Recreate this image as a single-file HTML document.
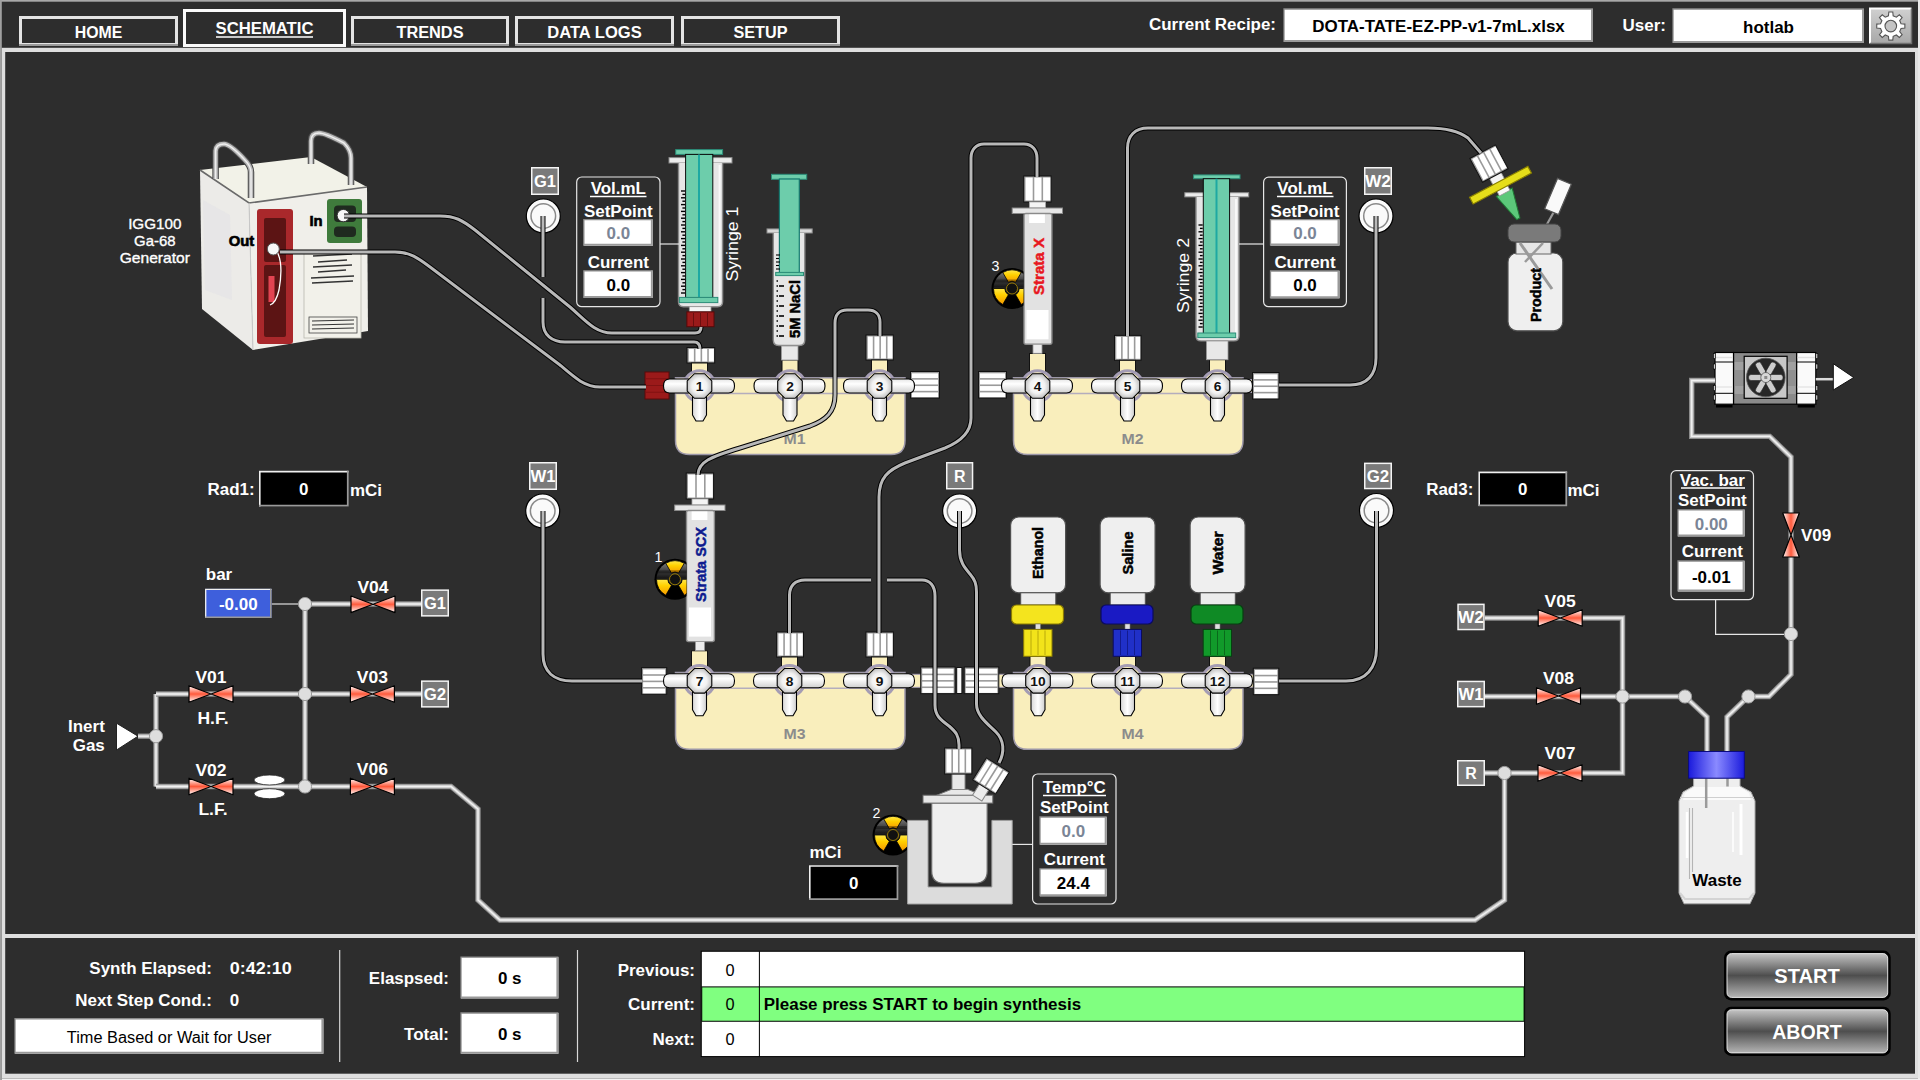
<!DOCTYPE html><html><head><meta charset="utf-8"><style>html,body{margin:0;padding:0;background:#2d2d2d;overflow:hidden}svg{display:block}</style></head><body>
<svg width="1920" height="1080" viewBox="0 0 1920 1080">
<defs>
<linearGradient id="vgrad" x1="0" y1="0" x2="0" y2="1"><stop offset="0" stop-color="#fff"/><stop offset="0.5" stop-color="#ff5a3c"/><stop offset="1" stop-color="#fff"/></linearGradient>
<linearGradient id="vgradh" x1="0" y1="0" x2="1" y2="0"><stop offset="0" stop-color="#fff"/><stop offset="0.5" stop-color="#ff5a3c"/><stop offset="1" stop-color="#fff"/></linearGradient>
<linearGradient id="armh" x1="0" y1="0" x2="0" y2="1"><stop offset="0" stop-color="#e6e6e6"/><stop offset="0.35" stop-color="#fff"/><stop offset="1" stop-color="#cfcfcf"/></linearGradient>
<linearGradient id="armv" x1="0" y1="0" x2="1" y2="0"><stop offset="0" stop-color="#d8d8d8"/><stop offset="0.5" stop-color="#fff"/><stop offset="1" stop-color="#cfcfcf"/></linearGradient>
<radialGradient id="hub" cx="0.5" cy="0.5" r="0.5"><stop offset="0" stop-color="#fff"/><stop offset="0.6" stop-color="#f2f2f2"/><stop offset="1" stop-color="#c4c4c4"/></radialGradient>
<linearGradient id="radg" x1="0" y1="0" x2="0" y2="1"><stop offset="0" stop-color="#ffe84a"/><stop offset="0.4" stop-color="#ffd000"/><stop offset="1" stop-color="#f59800"/></linearGradient>
<linearGradient id="radblk" x1="0" y1="0" x2="0" y2="1"><stop offset="0" stop-color="#8a8a8a"/><stop offset="0.3" stop-color="#3a3a3a"/><stop offset="0.45" stop-color="#1a1a1a"/><stop offset="0.55" stop-color="#333"/><stop offset="0.7" stop-color="#000"/><stop offset="1" stop-color="#000"/></linearGradient>
<linearGradient id="btng" x1="0" y1="0" x2="0" y2="1"><stop offset="0" stop-color="#c4c4c4"/><stop offset="0.5" stop-color="#4e4e4e"/><stop offset="1" stop-color="#b4b4b4"/></linearGradient>
<linearGradient id="gearg" x1="0" y1="0" x2="0" y2="1"><stop offset="0" stop-color="#d0d0d0"/><stop offset="1" stop-color="#a8a8a8"/></linearGradient>
<linearGradient id="capblue" x1="0" y1="0" x2="1" y2="0"><stop offset="0" stop-color="#1a1adc"/><stop offset="0.5" stop-color="#8a8aff"/><stop offset="1" stop-color="#1a1adc"/></linearGradient>
<linearGradient id="bottleg" x1="0" y1="0" x2="1" y2="0"><stop offset="0" stop-color="#e8e8e8"/><stop offset="0.3" stop-color="#fafafa"/><stop offset="1" stop-color="#e0e0e0"/></linearGradient>
</defs>
<rect x="0" y="0" width="1920.00" height="1080.00" fill="#2d2d2d" />
<rect x="0" y="0" width="1920.00" height="1.70" fill="#a8a8a8" />
<rect x="0" y="0" width="1.80" height="1080.00" fill="#a0a0a0" />
<rect x="1918" y="0" width="2.00" height="1080.00" fill="#e8e8e8" />
<rect x="1.8" y="47.8" width="1916.20" height="1030.70" fill="#dedede" />
<rect x="5.2" y="52" width="1909.80" height="882.00" fill="#2d2d2d" />
<rect x="5.2" y="938" width="1909.80" height="135.70" fill="#2d2d2d" />
<rect x="1.8" y="1078.5" width="1918.20" height="1.50" fill="#f2f2f2" />
<rect x="20.5" y="17.5" width="156.00" height="27.00" fill="#2d2d2d" stroke="#e4e4e4" stroke-width="3" />
<line x1="19" y1="45" x2="178" y2="45" stroke="#9a9a9a" stroke-width="2"/>
<text x="98.5" y="32.0" font-family='"Liberation Sans", sans-serif' font-size="16" font-weight="bold" fill="#fff" text-anchor="middle" dominant-baseline="central" textLength="47.5" lengthAdjust="spacingAndGlyphs" >HOME</text>
<rect x="184.5" y="10.5" width="160.00" height="35.00" fill="#2d2d2d" stroke="#fafafa" stroke-width="3" />
<text x="264.5" y="28.0" font-family='"Liberation Sans", sans-serif' font-size="16" font-weight="bold" fill="#fff" text-anchor="middle" dominant-baseline="central" textLength="98" lengthAdjust="spacingAndGlyphs" >SCHEMATIC</text>
<line x1="216.0" y1="37.0" x2="313.0" y2="37.0" stroke="#fff" stroke-width="1.6"/>
<rect x="352.5" y="17.5" width="155.00" height="27.00" fill="#2d2d2d" stroke="#e4e4e4" stroke-width="3" />
<line x1="351" y1="45" x2="509" y2="45" stroke="#9a9a9a" stroke-width="2"/>
<text x="430.0" y="32.0" font-family='"Liberation Sans", sans-serif' font-size="16" font-weight="bold" fill="#fff" text-anchor="middle" dominant-baseline="central" textLength="67" lengthAdjust="spacingAndGlyphs" >TRENDS</text>
<rect x="516.5" y="17.5" width="156.00" height="27.00" fill="#2d2d2d" stroke="#e4e4e4" stroke-width="3" />
<line x1="515" y1="45" x2="674" y2="45" stroke="#9a9a9a" stroke-width="2"/>
<text x="594.5" y="32.0" font-family='"Liberation Sans", sans-serif' font-size="16" font-weight="bold" fill="#fff" text-anchor="middle" dominant-baseline="central" textLength="94.5" lengthAdjust="spacingAndGlyphs" >DATA LOGS</text>
<rect x="682.5" y="17.5" width="156.00" height="27.00" fill="#2d2d2d" stroke="#e4e4e4" stroke-width="3" />
<line x1="681" y1="45" x2="840" y2="45" stroke="#9a9a9a" stroke-width="2"/>
<text x="760.5" y="32.0" font-family='"Liberation Sans", sans-serif' font-size="16" font-weight="bold" fill="#fff" text-anchor="middle" dominant-baseline="central" textLength="54" lengthAdjust="spacingAndGlyphs" >SETUP</text>
<text x="1276" y="24.5" font-family='"Liberation Sans", sans-serif' font-size="16" font-weight="bold" fill="#fff" text-anchor="end" dominant-baseline="central" textLength="127" lengthAdjust="spacingAndGlyphs" >Current Recipe:</text>
<rect x="1284" y="9" width="309.00" height="33.00" fill="#fff" />
<path d="M1284 42 V9 H1593" fill="none" stroke="#8c8c8c" stroke-width="1.3"/>
<path d="M1284 41 H1592 V9" fill="none" stroke="#9a9a9a" stroke-width="2"/>
<text x="1438.5" y="26.5" font-family='"Liberation Sans", sans-serif' font-size="16" font-weight="bold" fill="#000" text-anchor="middle" dominant-baseline="central" textLength="252.55" lengthAdjust="spacingAndGlyphs" >DOTA-TATE-EZ-PP-v1-7mL.xlsx</text>
<text x="1666" y="25" font-family='"Liberation Sans", sans-serif' font-size="16" font-weight="bold" fill="#fff" text-anchor="end" dominant-baseline="central" textLength="43.36" lengthAdjust="spacingAndGlyphs" >User:</text>
<rect x="1673" y="9" width="191.00" height="34.00" fill="#fff" />
<path d="M1673 43 V9 H1864" fill="none" stroke="#8c8c8c" stroke-width="1.3"/>
<path d="M1673 42 H1863 V9" fill="none" stroke="#9a9a9a" stroke-width="2"/>
<text x="1768.5" y="27.0" font-family='"Liberation Sans", sans-serif' font-size="16" font-weight="bold" fill="#000" text-anchor="middle" dominant-baseline="central" textLength="50.87" lengthAdjust="spacingAndGlyphs" >hotlab</text>
<rect x="1870" y="8.5" width="41.50" height="35.00" fill="url(#gearg)" />
<path d="M1870 43.5 V8.5 H1911.5" fill="none" stroke="#fff" stroke-width="2"/>
<path d="M1870 43.5 H1911.5 V8.5" fill="none" stroke="#707070" stroke-width="1.5"/>
<polygon points="1901.03,23.74 1904.86,24.12 1904.86,28.08 1901.03,28.46 1899.70,31.66 1902.14,34.65 1899.35,37.44 1896.36,35.00 1893.16,36.33 1892.78,40.16 1888.82,40.16 1888.44,36.33 1885.24,35.00 1882.25,37.44 1879.46,34.65 1881.90,31.66 1880.57,28.46 1876.74,28.08 1876.74,24.12 1880.57,23.74 1881.90,20.54 1879.46,17.55 1882.25,14.76 1885.24,17.20 1888.44,15.87 1888.82,12.04 1892.78,12.04 1893.16,15.87 1896.36,17.20 1899.35,14.76 1902.14,17.55 1899.70,20.54" fill="#fff" stroke="#555" stroke-width="1.1"/>
<circle cx="1890.8" cy="26.1" r="5.8" fill="#c4c4c4" stroke="#555" stroke-width="1.1"/>
<g>
<polygon points="200,170 249,203 253,350 202,309" fill="#ecebe8"/>
<polygon points="203,200 230,215 232,300 205,290" fill="#dcdbe6" opacity="0.3"/>
<polygon points="200,170 311,157 367,187 249,203" fill="#f2f2e8"/>
<polygon points="249,203 367,187 368,331 253,350" fill="#f0efea"/>
<polyline points="200,170 249,203 367,187" fill="none" stroke="#6a6a6a" stroke-width="1.6"/>
<line x1="249" y1="203" x2="253" y2="350" stroke="#c8c8c8" stroke-width="1"/>
<path d="M215.6 179 V151 Q216 144 224 144 Q230 144 244 159 Q251 166 251 172 V198" fill="none" stroke="#4a4a4a" stroke-width="6.5"/>
<path d="M215.6 179 V151 Q216 144 224 144 Q230 144 244 159 Q251 166 251 172 V198" fill="none" stroke="#b8b8b8" stroke-width="4.4"/>
<path d="M215.6 179 V151 Q216 144 224 144 Q230 144 244 159 Q251 166 251 172 V198" fill="none" stroke="#efefef" stroke-width="1.5"/>
<path d="M311 164 V141 Q311 133 319 133 Q325 133 344 143 Q351 150 351 158 V185" fill="none" stroke="#4a4a4a" stroke-width="6.5"/>
<path d="M311 164 V141 Q311 133 319 133 Q325 133 344 143 Q351 150 351 158 V185" fill="none" stroke="#b8b8b8" stroke-width="4.4"/>
<path d="M311 164 V141 Q311 133 319 133 Q325 133 344 143 Q351 150 351 158 V185" fill="none" stroke="#efefef" stroke-width="1.5"/>
<rect x="257" y="209" width="36.00" height="135.00" fill="#a9282b" rx="3" />
<rect x="264" y="218" width="22.00" height="44.00" fill="#5c1414" rx="2" />
<rect x="264" y="265" width="22.00" height="72.00" fill="#5c1414" rx="2" />
<rect x="268.5" y="276" width="6.00" height="26.00" fill="#e24452" />
<path d="M276 250 Q284 262 279 290 Q276 303 270 305" fill="none" stroke="#fff" stroke-width="1.3"/>
<circle cx="273.3" cy="249" r="6" fill="#f8f8f8" stroke="#555" stroke-width="1"/>
<rect x="327" y="199" width="35.00" height="44.00" fill="#3f7b3c" rx="3" />
<rect x="334" y="205.5" width="22.00" height="16.50" fill="#1f2a1f" rx="4" />
<rect x="334" y="226.5" width="22.00" height="10.50" fill="#1f2a1f" rx="4" />
<circle cx="343.3" cy="215.6" r="6.2" fill="#f8f8f8" stroke="#333" stroke-width="1"/>
<text x="316" y="221" font-family='"Liberation Sans", sans-serif' font-size="14" font-weight="bold" fill="#000" text-anchor="middle" dominant-baseline="central" textLength="13.19" lengthAdjust="spacingAndGlyphs" stroke="#000" stroke-width="0.6">In</text>
<text x="241.5" y="240.5" font-family='"Liberation Sans", sans-serif' font-size="14" font-weight="bold" fill="#000" text-anchor="middle" dominant-baseline="central" textLength="25.55" lengthAdjust="spacingAndGlyphs" stroke="#000" stroke-width="0.6">Out</text>
<rect x="304" y="251" width="57.00" height="87.00" fill="#f2f1ea" stroke="#b8b8b0" stroke-width="0.8" />
<line x1="313" y1="256" x2="352" y2="254" stroke="#333" stroke-width="1.6"/>
<line x1="318" y1="262" x2="347" y2="260" stroke="#333" stroke-width="1.6"/>
<line x1="313" y1="267" x2="352" y2="265" stroke="#333" stroke-width="1.6"/>
<line x1="318" y1="272" x2="346" y2="270" stroke="#333" stroke-width="1.6"/>
<line x1="311" y1="278" x2="354" y2="276" stroke="#333" stroke-width="1.6"/>
<line x1="312" y1="283" x2="353" y2="281" stroke="#333" stroke-width="1.6"/>
<rect x="309" y="317" width="48.00" height="16.00" fill="#f2f1ea" stroke="#444" stroke-width="0.8" />
<line x1="312" y1="321" x2="354" y2="320" stroke="#333" stroke-width="1.2"/>
<line x1="312" y1="325" x2="354" y2="324" stroke="#333" stroke-width="1.2"/>
<line x1="312" y1="329" x2="354" y2="328" stroke="#333" stroke-width="1.2"/>
</g>
<text x="154.8" y="223" font-family='"Liberation Sans", sans-serif' font-size="15" font-weight="normal" fill="#fff" text-anchor="middle" dominant-baseline="central" textLength="53.3" lengthAdjust="spacingAndGlyphs" stroke="#fff" stroke-width="0.35">IGG100</text>
<text x="154.8" y="240.1" font-family='"Liberation Sans", sans-serif' font-size="15" font-weight="normal" fill="#fff" text-anchor="middle" dominant-baseline="central" textLength="41.4" lengthAdjust="spacingAndGlyphs" stroke="#fff" stroke-width="0.35">Ga-68</text>
<text x="154.8" y="257" font-family='"Liberation Sans", sans-serif' font-size="15" font-weight="normal" fill="#fff" text-anchor="middle" dominant-baseline="central" textLength="70.3" lengthAdjust="spacingAndGlyphs" stroke="#fff" stroke-width="0.35">Generator</text>
<path d="M675.5 377.7 H905.0 V440.5 Q905.0 454.5 891.0 454.5 H689.5 Q675.5 454.5 675.5 440.5 Z" fill="#f9eebc" stroke="#9c97a8" stroke-width="1.5"/>
<line x1="675.5" y1="393.5" x2="905.0" y2="393.5" stroke="#b4adbd" stroke-width="1.5"/>
<text x="794.5" y="438.8" font-family='"Liberation Sans", sans-serif' font-size="15" font-weight="bold" fill="#8c8c8c" text-anchor="middle" dominant-baseline="central" textLength="22.09" lengthAdjust="spacingAndGlyphs" >M1</text>
<path d="M1013.5 377.7 H1243.0 V440.5 Q1243.0 454.5 1229.0 454.5 H1027.5 Q1013.5 454.5 1013.5 440.5 Z" fill="#f9eebc" stroke="#9c97a8" stroke-width="1.5"/>
<line x1="1013.5" y1="393.5" x2="1243.0" y2="393.5" stroke="#b4adbd" stroke-width="1.5"/>
<text x="1132.5" y="438.8" font-family='"Liberation Sans", sans-serif' font-size="15" font-weight="bold" fill="#8c8c8c" text-anchor="middle" dominant-baseline="central" textLength="22.09" lengthAdjust="spacingAndGlyphs" >M2</text>
<path d="M675.5 672.5 H905.0 V735.3 Q905.0 749.3 891.0 749.3 H689.5 Q675.5 749.3 675.5 735.3 Z" fill="#f9eebc" stroke="#9c97a8" stroke-width="1.5"/>
<line x1="675.5" y1="688.3" x2="905.0" y2="688.3" stroke="#b4adbd" stroke-width="1.5"/>
<text x="794.5" y="733.5999999999999" font-family='"Liberation Sans", sans-serif' font-size="15" font-weight="bold" fill="#8c8c8c" text-anchor="middle" dominant-baseline="central" textLength="22.09" lengthAdjust="spacingAndGlyphs" >M3</text>
<path d="M1013.5 672.5 H1243.0 V735.3 Q1243.0 749.3 1229.0 749.3 H1027.5 Q1013.5 749.3 1013.5 735.3 Z" fill="#f9eebc" stroke="#9c97a8" stroke-width="1.5"/>
<line x1="1013.5" y1="688.3" x2="1243.0" y2="688.3" stroke="#b4adbd" stroke-width="1.5"/>
<text x="1132.5" y="733.5999999999999" font-family='"Liberation Sans", sans-serif' font-size="15" font-weight="bold" fill="#8c8c8c" text-anchor="middle" dominant-baseline="central" textLength="22.09" lengthAdjust="spacingAndGlyphs" >M4</text>
<rect x="664" y="379.5" width="8.00" height="13.00" fill="#f9eebc" stroke="#a79fb6" stroke-width="1" />
<rect x="645" y="372" width="24.00" height="27.00" fill="#9b1a1a" stroke="#5a0a0a" stroke-width="1" />
<line x1="646" y1="378.75" x2="668" y2="378.75" stroke="#7a1010" stroke-width="0.8"/>
<line x1="646" y1="385.5" x2="668" y2="385.5" stroke="#7a1010" stroke-width="0.8"/>
<line x1="646" y1="392.25" x2="668" y2="392.25" stroke="#7a1010" stroke-width="0.8"/>
<rect x="902" y="379.5" width="10.00" height="13.00" fill="#f9eebc" stroke="#a79fb6" stroke-width="1" />
<rect x="910.5" y="371.5" width="29.00" height="26.50" fill="#9a9a9a" stroke="#111" stroke-width="1" />
<rect x="912.0" y="373.3" width="26.00" height="4.77" fill="#fff" />
<rect x="912.0" y="379.675" width="26.00" height="4.77" fill="#fff" />
<rect x="912.0" y="386.05" width="26.00" height="4.77" fill="#fff" />
<rect x="912.0" y="392.425" width="26.00" height="4.77" fill="#fff" />
<rect x="1000" y="379.5" width="10.00" height="13.00" fill="#f9eebc" stroke="#a79fb6" stroke-width="1" />
<rect x="978.5" y="371.5" width="28.00" height="26.50" fill="#9a9a9a" stroke="#111" stroke-width="1" />
<rect x="980.0" y="373.3" width="25.00" height="4.77" fill="#fff" />
<rect x="980.0" y="379.675" width="25.00" height="4.77" fill="#fff" />
<rect x="980.0" y="386.05" width="25.00" height="4.77" fill="#fff" />
<rect x="980.0" y="392.425" width="25.00" height="4.77" fill="#fff" />
<rect x="1240" y="379.5" width="15.00" height="13.00" fill="#f9eebc" stroke="#a79fb6" stroke-width="1" />
<rect x="1252.5" y="372.5" width="26.50" height="26.50" fill="#9a9a9a" stroke="#111" stroke-width="1" />
<rect x="1254.0" y="374.3" width="23.50" height="4.77" fill="#fff" />
<rect x="1254.0" y="380.675" width="23.50" height="4.77" fill="#fff" />
<rect x="1254.0" y="387.05" width="23.50" height="4.77" fill="#fff" />
<rect x="1254.0" y="393.425" width="23.50" height="4.77" fill="#fff" />
<rect x="662" y="674.3" width="10.00" height="13.00" fill="#f9eebc" stroke="#a79fb6" stroke-width="1" />
<rect x="641.6" y="667.6" width="25.10" height="26.60" fill="#9a9a9a" stroke="#111" stroke-width="1" />
<rect x="643.1" y="669.4" width="22.10" height="4.80" fill="#fff" />
<rect x="643.1" y="675.8" width="22.10" height="4.80" fill="#fff" />
<rect x="643.1" y="682.2" width="22.10" height="4.80" fill="#fff" />
<rect x="643.1" y="688.6" width="22.10" height="4.80" fill="#fff" />
<rect x="902" y="674.3" width="20.00" height="13.00" fill="#f9eebc" stroke="#a79fb6" stroke-width="1" />
<rect x="920.7" y="667" width="34.40" height="26.70" fill="#9a9a9a" stroke="#111" stroke-width="1" />
<rect x="922.2" y="668.8" width="31.40" height="4.83" fill="#fff" />
<rect x="922.2" y="675.2249999999999" width="31.40" height="4.83" fill="#fff" />
<rect x="922.2" y="681.65" width="31.40" height="4.83" fill="#fff" />
<rect x="922.2" y="688.075" width="31.40" height="4.83" fill="#fff" />
<rect x="956.7" y="667.5" width="5.20" height="26.00" fill="#fafafa" stroke="#111" stroke-width="1" />
<rect x="994" y="674.3" width="16.00" height="13.00" fill="#f9eebc" stroke="#a79fb6" stroke-width="1" />
<rect x="964.2" y="667" width="34.60" height="26.70" fill="#9a9a9a" stroke="#111" stroke-width="1" />
<rect x="965.7" y="668.8" width="31.60" height="4.83" fill="#fff" />
<rect x="965.7" y="675.2249999999999" width="31.60" height="4.83" fill="#fff" />
<rect x="965.7" y="681.65" width="31.60" height="4.83" fill="#fff" />
<rect x="965.7" y="688.075" width="31.60" height="4.83" fill="#fff" />
<rect x="1240" y="674.3" width="16.00" height="13.00" fill="#f9eebc" stroke="#a79fb6" stroke-width="1" />
<rect x="1253.3" y="668.2" width="25.50" height="26.50" fill="#9a9a9a" stroke="#111" stroke-width="1" />
<rect x="1254.8" y="670.0" width="22.50" height="4.78" fill="#fff" />
<rect x="1254.8" y="676.375" width="22.50" height="4.78" fill="#fff" />
<rect x="1254.8" y="682.75" width="22.50" height="4.78" fill="#fff" />
<rect x="1254.8" y="689.125" width="22.50" height="4.78" fill="#fff" />
<rect x="687" y="347.5" width="27.70" height="15.50" fill="#9a9a9a" stroke="#111" stroke-width="1" />
<rect x="688.8" y="349.0" width="5.08" height="12.50" fill="#fff" />
<rect x="695.4749999999999" y="349.0" width="5.08" height="12.50" fill="#fff" />
<rect x="702.15" y="349.0" width="5.08" height="12.50" fill="#fff" />
<rect x="708.825" y="349.0" width="5.08" height="12.50" fill="#fff" />
<rect x="866" y="335" width="27.30" height="25.00" fill="#9a9a9a" stroke="#111" stroke-width="1" />
<rect x="867.8" y="336.5" width="4.98" height="22.00" fill="#fff" />
<rect x="874.375" y="336.5" width="4.98" height="22.00" fill="#fff" />
<rect x="880.9499999999999" y="336.5" width="4.98" height="22.00" fill="#fff" />
<rect x="887.5249999999999" y="336.5" width="4.98" height="22.00" fill="#fff" />
<rect x="1114.5" y="335.4" width="26.50" height="24.90" fill="#9a9a9a" stroke="#111" stroke-width="1" />
<rect x="1116.3" y="336.9" width="4.78" height="21.90" fill="#fff" />
<rect x="1122.675" y="336.9" width="4.78" height="21.90" fill="#fff" />
<rect x="1129.05" y="336.9" width="4.78" height="21.90" fill="#fff" />
<rect x="1135.425" y="336.9" width="4.78" height="21.90" fill="#fff" />
<rect x="776.6" y="632" width="26.90" height="25.00" fill="#9a9a9a" stroke="#111" stroke-width="1" />
<rect x="778.4" y="633.5" width="4.88" height="22.00" fill="#fff" />
<rect x="784.875" y="633.5" width="4.88" height="22.00" fill="#fff" />
<rect x="791.3499999999999" y="633.5" width="4.88" height="22.00" fill="#fff" />
<rect x="797.8249999999999" y="633.5" width="4.88" height="22.00" fill="#fff" />
<rect x="865.9" y="632" width="27.50" height="25.00" fill="#9a9a9a" stroke="#111" stroke-width="1" />
<rect x="867.6999999999999" y="633.5" width="5.03" height="22.00" fill="#fff" />
<rect x="874.3249999999999" y="633.5" width="5.03" height="22.00" fill="#fff" />
<rect x="880.9499999999999" y="633.5" width="5.03" height="22.00" fill="#fff" />
<rect x="887.5749999999999" y="633.5" width="5.03" height="22.00" fill="#fff" />
<rect x="691.5" y="363" width="16.00" height="13.00" fill="#f9eebc" stroke="#111" stroke-width="1" />
<circle cx="699.5" cy="386" r="15.3" fill="#f9eebc" stroke="#a49cb4" stroke-width="3"/>
<path d="M688.5 379 H669.5 Q663.5 379 663.5 386 Q663.5 393 669.5 393 H688.5 Z" fill="url(#armh)" stroke="#000" stroke-width="1.1"/>
<path d="M710.5 379 H728.5 Q734.5 379 734.5 386 Q734.5 393 728.5 393 H710.5 Z" fill="url(#armh)" stroke="#000" stroke-width="1.1"/>
<path d="M692.5 396 V415 L696.0 421 H703.0 L706.5 415 V396 Z" fill="url(#armv)" stroke="#000" stroke-width="1.1" stroke-linejoin="round"/>
<polygon points="711.79,391.09 704.59,398.29 694.41,398.29 687.21,391.09 687.21,380.91 694.41,373.71 704.59,373.71 711.79,380.91" fill="url(#hub)" stroke="#000" stroke-width="1.1"/>
<text x="699.5" y="386.5" font-family='"Liberation Sans", sans-serif' font-size="13" font-weight="bold" fill="#111" text-anchor="middle" dominant-baseline="central" textLength="7.66" lengthAdjust="spacingAndGlyphs" >1</text>
<rect x="782" y="360" width="16.00" height="16.00" fill="#f9eebc" stroke="#111" stroke-width="1" />
<circle cx="790" cy="386" r="15.3" fill="#f9eebc" stroke="#a49cb4" stroke-width="3"/>
<path d="M779 379 H760 Q754 379 754 386 Q754 393 760 393 H779 Z" fill="url(#armh)" stroke="#000" stroke-width="1.1"/>
<path d="M801 379 H819 Q825 379 825 386 Q825 393 819 393 H801 Z" fill="url(#armh)" stroke="#000" stroke-width="1.1"/>
<path d="M783 396 V415 L786.5 421 H793.5 L797 415 V396 Z" fill="url(#armv)" stroke="#000" stroke-width="1.1" stroke-linejoin="round"/>
<polygon points="802.29,391.09 795.09,398.29 784.91,398.29 777.71,391.09 777.71,380.91 784.91,373.71 795.09,373.71 802.29,380.91" fill="url(#hub)" stroke="#000" stroke-width="1.1"/>
<text x="790" y="386.5" font-family='"Liberation Sans", sans-serif' font-size="13" font-weight="bold" fill="#111" text-anchor="middle" dominant-baseline="central" textLength="7.66" lengthAdjust="spacingAndGlyphs" >2</text>
<rect x="871.5" y="360" width="16.00" height="16.00" fill="#f9eebc" stroke="#111" stroke-width="1" />
<circle cx="879.5" cy="386" r="15.3" fill="#f9eebc" stroke="#a49cb4" stroke-width="3"/>
<path d="M868.5 379 H849.5 Q843.5 379 843.5 386 Q843.5 393 849.5 393 H868.5 Z" fill="url(#armh)" stroke="#000" stroke-width="1.1"/>
<path d="M890.5 379 H908.5 Q914.5 379 914.5 386 Q914.5 393 908.5 393 H890.5 Z" fill="url(#armh)" stroke="#000" stroke-width="1.1"/>
<path d="M872.5 396 V415 L876.0 421 H883.0 L886.5 415 V396 Z" fill="url(#armv)" stroke="#000" stroke-width="1.1" stroke-linejoin="round"/>
<polygon points="891.79,391.09 884.59,398.29 874.41,398.29 867.21,391.09 867.21,380.91 874.41,373.71 884.59,373.71 891.79,380.91" fill="url(#hub)" stroke="#000" stroke-width="1.1"/>
<text x="879.5" y="386.5" font-family='"Liberation Sans", sans-serif' font-size="13" font-weight="bold" fill="#111" text-anchor="middle" dominant-baseline="central" textLength="7.66" lengthAdjust="spacingAndGlyphs" >3</text>
<rect x="1029.5" y="353.5" width="16.00" height="22.50" fill="#f9eebc" stroke="#111" stroke-width="1" />
<circle cx="1037.5" cy="386" r="15.3" fill="#f9eebc" stroke="#a49cb4" stroke-width="3"/>
<path d="M1026.5 379 H1007.5 Q1001.5 379 1001.5 386 Q1001.5 393 1007.5 393 H1026.5 Z" fill="url(#armh)" stroke="#000" stroke-width="1.1"/>
<path d="M1048.5 379 H1066.5 Q1072.5 379 1072.5 386 Q1072.5 393 1066.5 393 H1048.5 Z" fill="url(#armh)" stroke="#000" stroke-width="1.1"/>
<path d="M1030.5 396 V415 L1034.0 421 H1041.0 L1044.5 415 V396 Z" fill="url(#armv)" stroke="#000" stroke-width="1.1" stroke-linejoin="round"/>
<polygon points="1049.79,391.09 1042.59,398.29 1032.41,398.29 1025.21,391.09 1025.21,380.91 1032.41,373.71 1042.59,373.71 1049.79,380.91" fill="url(#hub)" stroke="#000" stroke-width="1.1"/>
<text x="1037.5" y="386.5" font-family='"Liberation Sans", sans-serif' font-size="13" font-weight="bold" fill="#111" text-anchor="middle" dominant-baseline="central" textLength="7.66" lengthAdjust="spacingAndGlyphs" >4</text>
<rect x="1119.5" y="360.3" width="16.00" height="15.70" fill="#f9eebc" stroke="#111" stroke-width="1" />
<circle cx="1127.5" cy="386" r="15.3" fill="#f9eebc" stroke="#a49cb4" stroke-width="3"/>
<path d="M1116.5 379 H1097.5 Q1091.5 379 1091.5 386 Q1091.5 393 1097.5 393 H1116.5 Z" fill="url(#armh)" stroke="#000" stroke-width="1.1"/>
<path d="M1138.5 379 H1156.5 Q1162.5 379 1162.5 386 Q1162.5 393 1156.5 393 H1138.5 Z" fill="url(#armh)" stroke="#000" stroke-width="1.1"/>
<path d="M1120.5 396 V415 L1124.0 421 H1131.0 L1134.5 415 V396 Z" fill="url(#armv)" stroke="#000" stroke-width="1.1" stroke-linejoin="round"/>
<polygon points="1139.79,391.09 1132.59,398.29 1122.41,398.29 1115.21,391.09 1115.21,380.91 1122.41,373.71 1132.59,373.71 1139.79,380.91" fill="url(#hub)" stroke="#000" stroke-width="1.1"/>
<text x="1127.5" y="386.5" font-family='"Liberation Sans", sans-serif' font-size="13" font-weight="bold" fill="#111" text-anchor="middle" dominant-baseline="central" textLength="7.66" lengthAdjust="spacingAndGlyphs" >5</text>
<rect x="1209.5" y="359.7" width="16.00" height="16.30" fill="#f9eebc" stroke="#111" stroke-width="1" />
<circle cx="1217.5" cy="386" r="15.3" fill="#f9eebc" stroke="#a49cb4" stroke-width="3"/>
<path d="M1206.5 379 H1187.5 Q1181.5 379 1181.5 386 Q1181.5 393 1187.5 393 H1206.5 Z" fill="url(#armh)" stroke="#000" stroke-width="1.1"/>
<path d="M1228.5 379 H1246.5 Q1252.5 379 1252.5 386 Q1252.5 393 1246.5 393 H1228.5 Z" fill="url(#armh)" stroke="#000" stroke-width="1.1"/>
<path d="M1210.5 396 V415 L1214.0 421 H1221.0 L1224.5 415 V396 Z" fill="url(#armv)" stroke="#000" stroke-width="1.1" stroke-linejoin="round"/>
<polygon points="1229.79,391.09 1222.59,398.29 1212.41,398.29 1205.21,391.09 1205.21,380.91 1212.41,373.71 1222.59,373.71 1229.79,380.91" fill="url(#hub)" stroke="#000" stroke-width="1.1"/>
<text x="1217.5" y="386.5" font-family='"Liberation Sans", sans-serif' font-size="13" font-weight="bold" fill="#111" text-anchor="middle" dominant-baseline="central" textLength="7.66" lengthAdjust="spacingAndGlyphs" >6</text>
<rect x="691.5" y="650.8" width="16.00" height="20.00" fill="#f9eebc" stroke="#111" stroke-width="1" />
<circle cx="699.5" cy="680.8" r="15.3" fill="#f9eebc" stroke="#a49cb4" stroke-width="3"/>
<path d="M688.5 673.8 H669.5 Q663.5 673.8 663.5 680.8 Q663.5 687.8 669.5 687.8 H688.5 Z" fill="url(#armh)" stroke="#000" stroke-width="1.1"/>
<path d="M710.5 673.8 H728.5 Q734.5 673.8 734.5 680.8 Q734.5 687.8 728.5 687.8 H710.5 Z" fill="url(#armh)" stroke="#000" stroke-width="1.1"/>
<path d="M692.5 690.8 V709.8 L696.0 715.8 H703.0 L706.5 709.8 V690.8 Z" fill="url(#armv)" stroke="#000" stroke-width="1.1" stroke-linejoin="round"/>
<polygon points="711.79,685.89 704.59,693.09 694.41,693.09 687.21,685.89 687.21,675.71 694.41,668.51 704.59,668.51 711.79,675.71" fill="url(#hub)" stroke="#000" stroke-width="1.1"/>
<text x="699.5" y="681.3" font-family='"Liberation Sans", sans-serif' font-size="13" font-weight="bold" fill="#111" text-anchor="middle" dominant-baseline="central" textLength="7.66" lengthAdjust="spacingAndGlyphs" >7</text>
<rect x="781.5" y="657" width="16.00" height="13.80" fill="#f9eebc" stroke="#111" stroke-width="1" />
<circle cx="789.5" cy="680.8" r="15.3" fill="#f9eebc" stroke="#a49cb4" stroke-width="3"/>
<path d="M778.5 673.8 H759.5 Q753.5 673.8 753.5 680.8 Q753.5 687.8 759.5 687.8 H778.5 Z" fill="url(#armh)" stroke="#000" stroke-width="1.1"/>
<path d="M800.5 673.8 H818.5 Q824.5 673.8 824.5 680.8 Q824.5 687.8 818.5 687.8 H800.5 Z" fill="url(#armh)" stroke="#000" stroke-width="1.1"/>
<path d="M782.5 690.8 V709.8 L786.0 715.8 H793.0 L796.5 709.8 V690.8 Z" fill="url(#armv)" stroke="#000" stroke-width="1.1" stroke-linejoin="round"/>
<polygon points="801.79,685.89 794.59,693.09 784.41,693.09 777.21,685.89 777.21,675.71 784.41,668.51 794.59,668.51 801.79,675.71" fill="url(#hub)" stroke="#000" stroke-width="1.1"/>
<text x="789.5" y="681.3" font-family='"Liberation Sans", sans-serif' font-size="13" font-weight="bold" fill="#111" text-anchor="middle" dominant-baseline="central" textLength="7.66" lengthAdjust="spacingAndGlyphs" >8</text>
<rect x="871.5" y="657" width="16.00" height="13.80" fill="#f9eebc" stroke="#111" stroke-width="1" />
<circle cx="879.5" cy="680.8" r="15.3" fill="#f9eebc" stroke="#a49cb4" stroke-width="3"/>
<path d="M868.5 673.8 H849.5 Q843.5 673.8 843.5 680.8 Q843.5 687.8 849.5 687.8 H868.5 Z" fill="url(#armh)" stroke="#000" stroke-width="1.1"/>
<path d="M890.5 673.8 H908.5 Q914.5 673.8 914.5 680.8 Q914.5 687.8 908.5 687.8 H890.5 Z" fill="url(#armh)" stroke="#000" stroke-width="1.1"/>
<path d="M872.5 690.8 V709.8 L876.0 715.8 H883.0 L886.5 709.8 V690.8 Z" fill="url(#armv)" stroke="#000" stroke-width="1.1" stroke-linejoin="round"/>
<polygon points="891.79,685.89 884.59,693.09 874.41,693.09 867.21,685.89 867.21,675.71 874.41,668.51 884.59,668.51 891.79,675.71" fill="url(#hub)" stroke="#000" stroke-width="1.1"/>
<text x="879.5" y="681.3" font-family='"Liberation Sans", sans-serif' font-size="13" font-weight="bold" fill="#111" text-anchor="middle" dominant-baseline="central" textLength="7.66" lengthAdjust="spacingAndGlyphs" >9</text>
<rect x="1030" y="656.3" width="16.00" height="14.50" fill="#f9eebc" stroke="#111" stroke-width="1" />
<circle cx="1038" cy="680.8" r="15.3" fill="#f9eebc" stroke="#a49cb4" stroke-width="3"/>
<path d="M1027 673.8 H1008 Q1002 673.8 1002 680.8 Q1002 687.8 1008 687.8 H1027 Z" fill="url(#armh)" stroke="#000" stroke-width="1.1"/>
<path d="M1049 673.8 H1067 Q1073 673.8 1073 680.8 Q1073 687.8 1067 687.8 H1049 Z" fill="url(#armh)" stroke="#000" stroke-width="1.1"/>
<path d="M1031 690.8 V709.8 L1034.5 715.8 H1041.5 L1045 709.8 V690.8 Z" fill="url(#armv)" stroke="#000" stroke-width="1.1" stroke-linejoin="round"/>
<polygon points="1050.29,685.89 1043.09,693.09 1032.91,693.09 1025.71,685.89 1025.71,675.71 1032.91,668.51 1043.09,668.51 1050.29,675.71" fill="url(#hub)" stroke="#000" stroke-width="1.1"/>
<text x="1038" y="681.3" font-family='"Liberation Sans", sans-serif' font-size="13" font-weight="bold" fill="#111" text-anchor="middle" dominant-baseline="central" textLength="15.33" lengthAdjust="spacingAndGlyphs" >10</text>
<rect x="1119.5" y="656.3" width="16.00" height="14.50" fill="#f9eebc" stroke="#111" stroke-width="1" />
<circle cx="1127.5" cy="680.8" r="15.3" fill="#f9eebc" stroke="#a49cb4" stroke-width="3"/>
<path d="M1116.5 673.8 H1097.5 Q1091.5 673.8 1091.5 680.8 Q1091.5 687.8 1097.5 687.8 H1116.5 Z" fill="url(#armh)" stroke="#000" stroke-width="1.1"/>
<path d="M1138.5 673.8 H1156.5 Q1162.5 673.8 1162.5 680.8 Q1162.5 687.8 1156.5 687.8 H1138.5 Z" fill="url(#armh)" stroke="#000" stroke-width="1.1"/>
<path d="M1120.5 690.8 V709.8 L1124.0 715.8 H1131.0 L1134.5 709.8 V690.8 Z" fill="url(#armv)" stroke="#000" stroke-width="1.1" stroke-linejoin="round"/>
<polygon points="1139.79,685.89 1132.59,693.09 1122.41,693.09 1115.21,685.89 1115.21,675.71 1122.41,668.51 1132.59,668.51 1139.79,675.71" fill="url(#hub)" stroke="#000" stroke-width="1.1"/>
<text x="1127.5" y="681.3" font-family='"Liberation Sans", sans-serif' font-size="13" font-weight="bold" fill="#111" text-anchor="middle" dominant-baseline="central" textLength="14.57" lengthAdjust="spacingAndGlyphs" >11</text>
<rect x="1209.5" y="656.3" width="16.00" height="14.50" fill="#f9eebc" stroke="#111" stroke-width="1" />
<circle cx="1217.5" cy="680.8" r="15.3" fill="#f9eebc" stroke="#a49cb4" stroke-width="3"/>
<path d="M1206.5 673.8 H1187.5 Q1181.5 673.8 1181.5 680.8 Q1181.5 687.8 1187.5 687.8 H1206.5 Z" fill="url(#armh)" stroke="#000" stroke-width="1.1"/>
<path d="M1228.5 673.8 H1246.5 Q1252.5 673.8 1252.5 680.8 Q1252.5 687.8 1246.5 687.8 H1228.5 Z" fill="url(#armh)" stroke="#000" stroke-width="1.1"/>
<path d="M1210.5 690.8 V709.8 L1214.0 715.8 H1221.0 L1224.5 709.8 V690.8 Z" fill="url(#armv)" stroke="#000" stroke-width="1.1" stroke-linejoin="round"/>
<polygon points="1229.79,685.89 1222.59,693.09 1212.41,693.09 1205.21,685.89 1205.21,675.71 1212.41,668.51 1222.59,668.51 1229.79,675.71" fill="url(#hub)" stroke="#000" stroke-width="1.1"/>
<text x="1217.5" y="681.3" font-family='"Liberation Sans", sans-serif' font-size="13" font-weight="bold" fill="#111" text-anchor="middle" dominant-baseline="central" textLength="15.33" lengthAdjust="spacingAndGlyphs" >12</text>
<rect x="675.7" y="149.6" width="46.90" height="4.80" fill="#6dcdab" stroke="#2b8c78" stroke-width="1" />
<rect x="669" y="157.6" width="63.00" height="5.40" fill="#ececec" stroke="#8a8a8a" stroke-width="1" />
<path d="M678.5 163 V301.7 Q678.5 306.7 683.5 306.7 H717.6 Q722.6 306.7 722.6 301.7 V163" fill="#e6e6e6" stroke="#8a8a8a" stroke-width="1.4"/>
<line x1="719.6" y1="165" x2="719.6" y2="302.7" stroke="#f8f8f8" stroke-width="2"/>
<rect x="685.6" y="154.4" width="27.20" height="143.60" fill="#6dcdab" stroke="#0a0a0a" stroke-width="1" />
<line x1="699" y1="154.4" x2="699" y2="298" stroke="#1ea9a2" stroke-width="2"/>
<rect x="679.4" y="297.4" width="38.40" height="5.20" fill="#6dcdab" stroke="#2b8c78" stroke-width="1" />
<line x1="681.0" y1="191.0" x2="685.2" y2="191.0" stroke="#000" stroke-width="1.4"/>
<line x1="682.4000000000001" y1="194.4" x2="685.2" y2="194.4" stroke="#000" stroke-width="1.4"/>
<line x1="681.0" y1="197.8" x2="685.2" y2="197.8" stroke="#000" stroke-width="1.4"/>
<line x1="682.4000000000001" y1="201.2" x2="685.2" y2="201.2" stroke="#000" stroke-width="1.4"/>
<line x1="681.0" y1="204.6" x2="685.2" y2="204.6" stroke="#000" stroke-width="1.4"/>
<line x1="682.4000000000001" y1="208.0" x2="685.2" y2="208.0" stroke="#000" stroke-width="1.4"/>
<line x1="681.0" y1="211.4" x2="685.2" y2="211.4" stroke="#000" stroke-width="1.4"/>
<line x1="682.4000000000001" y1="214.8" x2="685.2" y2="214.8" stroke="#000" stroke-width="1.4"/>
<line x1="681.0" y1="218.2" x2="685.2" y2="218.2" stroke="#000" stroke-width="1.4"/>
<line x1="682.4000000000001" y1="221.6" x2="685.2" y2="221.6" stroke="#000" stroke-width="1.4"/>
<line x1="681.0" y1="225.0" x2="685.2" y2="225.0" stroke="#000" stroke-width="1.4"/>
<line x1="682.4000000000001" y1="228.4" x2="685.2" y2="228.4" stroke="#000" stroke-width="1.4"/>
<line x1="681.0" y1="231.8" x2="685.2" y2="231.8" stroke="#000" stroke-width="1.4"/>
<line x1="682.4000000000001" y1="235.2" x2="685.2" y2="235.2" stroke="#000" stroke-width="1.4"/>
<line x1="681.0" y1="238.6" x2="685.2" y2="238.6" stroke="#000" stroke-width="1.4"/>
<line x1="682.4000000000001" y1="242.0" x2="685.2" y2="242.0" stroke="#000" stroke-width="1.4"/>
<line x1="681.0" y1="245.4" x2="685.2" y2="245.4" stroke="#000" stroke-width="1.4"/>
<line x1="682.4000000000001" y1="248.8" x2="685.2" y2="248.8" stroke="#000" stroke-width="1.4"/>
<line x1="681.0" y1="252.2" x2="685.2" y2="252.2" stroke="#000" stroke-width="1.4"/>
<line x1="682.4000000000001" y1="255.6" x2="685.2" y2="255.6" stroke="#000" stroke-width="1.4"/>
<line x1="681.0" y1="259.0" x2="685.2" y2="259.0" stroke="#000" stroke-width="1.4"/>
<line x1="682.4000000000001" y1="262.4" x2="685.2" y2="262.4" stroke="#000" stroke-width="1.4"/>
<line x1="681.0" y1="265.8" x2="685.2" y2="265.8" stroke="#000" stroke-width="1.4"/>
<line x1="682.4000000000001" y1="269.2" x2="685.2" y2="269.2" stroke="#000" stroke-width="1.4"/>
<line x1="681.0" y1="272.6" x2="685.2" y2="272.6" stroke="#000" stroke-width="1.4"/>
<line x1="682.4000000000001" y1="276.0" x2="685.2" y2="276.0" stroke="#000" stroke-width="1.4"/>
<line x1="681.0" y1="279.4" x2="685.2" y2="279.4" stroke="#000" stroke-width="1.4"/>
<line x1="682.4000000000001" y1="282.8" x2="685.2" y2="282.8" stroke="#000" stroke-width="1.4"/>
<line x1="681.0" y1="286.2" x2="685.2" y2="286.2" stroke="#000" stroke-width="1.4"/>
<line x1="682.4000000000001" y1="289.6" x2="685.2" y2="289.6" stroke="#000" stroke-width="1.4"/>
<line x1="681.0" y1="293.0" x2="685.2" y2="293.0" stroke="#000" stroke-width="1.4"/>
<rect x="689.3" y="306.7" width="21.70" height="4.80" fill="#f4f4f4" stroke="#999" stroke-width="0.8" />
<rect x="686.9" y="311.9" width="27.10" height="14.80" fill="#9a1a1a" stroke="#5a0808" stroke-width="1" />
<line x1="693.5" y1="313" x2="693.5" y2="326" stroke="#6a0e0e" stroke-width="1"/>
<line x1="700.5" y1="313" x2="700.5" y2="326" stroke="#6a0e0e" stroke-width="1"/>
<line x1="707.5" y1="313" x2="707.5" y2="326" stroke="#6a0e0e" stroke-width="1"/>
<text x="732.2" y="244" font-family='"Liberation Sans", sans-serif' font-size="16" font-weight="normal" fill="#fff" text-anchor="middle" dominant-baseline="central" textLength="75" lengthAdjust="spacingAndGlyphs" transform="rotate(-90 732.2 244)">Syringe 1</text>
<rect x="1193.6" y="174.9" width="46.40" height="3.80" fill="#6dcdab" stroke="#2b8c78" stroke-width="1" />
<rect x="1184.8" y="192.7" width="63.90" height="4.20" fill="#ececec" stroke="#8a8a8a" stroke-width="1" />
<path d="M1196 196.9 V335.9 Q1196 340.9 1201 340.9 H1234 Q1239 340.9 1239 335.9 V196.9" fill="#e6e6e6" stroke="#8a8a8a" stroke-width="1.4"/>
<line x1="1236" y1="198.9" x2="1236" y2="336.9" stroke="#f8f8f8" stroke-width="2"/>
<rect x="1203.3" y="178.7" width="26.30" height="155.00" fill="#6dcdab" stroke="#0a0a0a" stroke-width="1" />
<line x1="1216.5" y1="178.7" x2="1216.5" y2="333.7" stroke="#1ea9a2" stroke-width="2"/>
<rect x="1197.8" y="333" width="37.90" height="4.60" fill="#6dcdab" stroke="#2b8c78" stroke-width="1" />
<line x1="1198.5" y1="225.0" x2="1202.7" y2="225.0" stroke="#000" stroke-width="1.4"/>
<line x1="1199.9" y1="228.4" x2="1202.7" y2="228.4" stroke="#000" stroke-width="1.4"/>
<line x1="1198.5" y1="231.8" x2="1202.7" y2="231.8" stroke="#000" stroke-width="1.4"/>
<line x1="1199.9" y1="235.2" x2="1202.7" y2="235.2" stroke="#000" stroke-width="1.4"/>
<line x1="1198.5" y1="238.6" x2="1202.7" y2="238.6" stroke="#000" stroke-width="1.4"/>
<line x1="1199.9" y1="242.0" x2="1202.7" y2="242.0" stroke="#000" stroke-width="1.4"/>
<line x1="1198.5" y1="245.4" x2="1202.7" y2="245.4" stroke="#000" stroke-width="1.4"/>
<line x1="1199.9" y1="248.8" x2="1202.7" y2="248.8" stroke="#000" stroke-width="1.4"/>
<line x1="1198.5" y1="252.2" x2="1202.7" y2="252.2" stroke="#000" stroke-width="1.4"/>
<line x1="1199.9" y1="255.6" x2="1202.7" y2="255.6" stroke="#000" stroke-width="1.4"/>
<line x1="1198.5" y1="259.0" x2="1202.7" y2="259.0" stroke="#000" stroke-width="1.4"/>
<line x1="1199.9" y1="262.4" x2="1202.7" y2="262.4" stroke="#000" stroke-width="1.4"/>
<line x1="1198.5" y1="265.8" x2="1202.7" y2="265.8" stroke="#000" stroke-width="1.4"/>
<line x1="1199.9" y1="269.2" x2="1202.7" y2="269.2" stroke="#000" stroke-width="1.4"/>
<line x1="1198.5" y1="272.6" x2="1202.7" y2="272.6" stroke="#000" stroke-width="1.4"/>
<line x1="1199.9" y1="276.0" x2="1202.7" y2="276.0" stroke="#000" stroke-width="1.4"/>
<line x1="1198.5" y1="279.4" x2="1202.7" y2="279.4" stroke="#000" stroke-width="1.4"/>
<line x1="1199.9" y1="282.8" x2="1202.7" y2="282.8" stroke="#000" stroke-width="1.4"/>
<line x1="1198.5" y1="286.2" x2="1202.7" y2="286.2" stroke="#000" stroke-width="1.4"/>
<line x1="1199.9" y1="289.6" x2="1202.7" y2="289.6" stroke="#000" stroke-width="1.4"/>
<line x1="1198.5" y1="293.0" x2="1202.7" y2="293.0" stroke="#000" stroke-width="1.4"/>
<line x1="1199.9" y1="296.4" x2="1202.7" y2="296.4" stroke="#000" stroke-width="1.4"/>
<line x1="1198.5" y1="299.8" x2="1202.7" y2="299.8" stroke="#000" stroke-width="1.4"/>
<line x1="1199.9" y1="303.2" x2="1202.7" y2="303.2" stroke="#000" stroke-width="1.4"/>
<line x1="1198.5" y1="306.6" x2="1202.7" y2="306.6" stroke="#000" stroke-width="1.4"/>
<line x1="1199.9" y1="310.0" x2="1202.7" y2="310.0" stroke="#000" stroke-width="1.4"/>
<line x1="1198.5" y1="313.4" x2="1202.7" y2="313.4" stroke="#000" stroke-width="1.4"/>
<line x1="1199.9" y1="316.8" x2="1202.7" y2="316.8" stroke="#000" stroke-width="1.4"/>
<line x1="1198.5" y1="320.2" x2="1202.7" y2="320.2" stroke="#000" stroke-width="1.4"/>
<line x1="1199.9" y1="323.6" x2="1202.7" y2="323.6" stroke="#000" stroke-width="1.4"/>
<line x1="1198.5" y1="327.0" x2="1202.7" y2="327.0" stroke="#000" stroke-width="1.4"/>
<rect x="1206.5" y="341" width="21.50" height="18.70" fill="#e8e8e8" stroke="#999" stroke-width="0.8" />
<text x="1183" y="275.5" font-family='"Liberation Sans", sans-serif' font-size="16" font-weight="normal" fill="#fff" text-anchor="middle" dominant-baseline="central" textLength="75" lengthAdjust="spacingAndGlyphs" transform="rotate(-90 1183 275.5)">Syringe 2</text>
<rect x="771.5" y="174.3" width="35.20" height="5.00" fill="#6dcdab" stroke="#2b8c78" stroke-width="1" />
<rect x="767" y="228.9" width="45.20" height="4.10" fill="#d8d8d8" stroke="#8a8a8a" stroke-width="1" />
<path d="M773.3 233 V340 Q773.3 345.5 778.8 345.5 H799.3 Q804.8 345.5 804.8 340 V233" fill="#e6e6e6" stroke="#8a8a8a" stroke-width="1.4"/>
<rect x="779.4" y="179" width="19.90" height="94.00" fill="#6dcdab" stroke="#177a70" stroke-width="1.2" />
<rect x="775.7" y="272.4" width="27.80" height="3.20" fill="#6dcdab" stroke="#2b8c78" stroke-width="1" />
<line x1="776" y1="255.0" x2="780" y2="255.0" stroke="#000" stroke-width="1.1"/>
<line x1="776" y1="258.5" x2="779" y2="258.5" stroke="#000" stroke-width="1.1"/>
<line x1="776" y1="262.0" x2="780" y2="262.0" stroke="#000" stroke-width="1.1"/>
<line x1="776" y1="265.5" x2="779" y2="265.5" stroke="#000" stroke-width="1.1"/>
<line x1="776" y1="269.0" x2="780" y2="269.0" stroke="#000" stroke-width="1.1"/>
<line x1="776.5" y1="281.0" x2="778" y2="281.0" stroke="#000" stroke-width="1.6"/>
<line x1="776.5" y1="286.0" x2="778" y2="286.0" stroke="#000" stroke-width="1.6"/>
<line x1="779" y1="286.0" x2="784" y2="286.0" stroke="#000" stroke-width="1.6"/>
<line x1="776.5" y1="291.0" x2="778" y2="291.0" stroke="#000" stroke-width="1.6"/>
<line x1="776.5" y1="296.0" x2="778" y2="296.0" stroke="#000" stroke-width="1.6"/>
<line x1="779" y1="296.0" x2="784" y2="296.0" stroke="#000" stroke-width="1.6"/>
<line x1="776.5" y1="301.0" x2="778" y2="301.0" stroke="#000" stroke-width="1.6"/>
<line x1="776.5" y1="306.0" x2="778" y2="306.0" stroke="#000" stroke-width="1.6"/>
<line x1="779" y1="306.0" x2="784" y2="306.0" stroke="#000" stroke-width="1.6"/>
<line x1="776.5" y1="311.0" x2="778" y2="311.0" stroke="#000" stroke-width="1.6"/>
<line x1="776.5" y1="316.0" x2="778" y2="316.0" stroke="#000" stroke-width="1.6"/>
<line x1="779" y1="316.0" x2="784" y2="316.0" stroke="#000" stroke-width="1.6"/>
<line x1="776.5" y1="321.0" x2="778" y2="321.0" stroke="#000" stroke-width="1.6"/>
<line x1="776.5" y1="326.0" x2="778" y2="326.0" stroke="#000" stroke-width="1.6"/>
<line x1="779" y1="326.0" x2="784" y2="326.0" stroke="#000" stroke-width="1.6"/>
<line x1="776.5" y1="331.0" x2="778" y2="331.0" stroke="#000" stroke-width="1.6"/>
<line x1="776.5" y1="336.0" x2="778" y2="336.0" stroke="#000" stroke-width="1.6"/>
<line x1="779" y1="336.0" x2="784" y2="336.0" stroke="#000" stroke-width="1.6"/>
<text x="794.5" y="309" font-family='"Liberation Sans", sans-serif' font-size="15" font-weight="bold" fill="#000" text-anchor="middle" dominant-baseline="central" textLength="58" lengthAdjust="spacingAndGlyphs" transform="rotate(-90 794.5 309)" stroke="#000" stroke-width="0.5">5M NaCl</text>
<rect x="781.4" y="346" width="16.60" height="14.00" fill="#e8e8e8" stroke="#999" stroke-width="0.8" />
<rect x="576.7" y="177" width="83.29999999999995" height="129.7" rx="5" fill="none" stroke="#e6e6e6" stroke-width="1.2"/>
<text x="618.35" y="188" font-family='"Liberation Sans", sans-serif' font-size="16" font-weight="bold" fill="#fff" text-anchor="middle" dominant-baseline="central" textLength="55.28" lengthAdjust="spacingAndGlyphs" >Vol.mL</text>
<text x="618.35" y="211" font-family='"Liberation Sans", sans-serif' font-size="16" font-weight="bold" fill="#fff" text-anchor="middle" dominant-baseline="central" textLength="68.79" lengthAdjust="spacingAndGlyphs" >SetPoint</text>
<rect x="583.85" y="219.7" width="69.00" height="26.10" fill="#fff" />
<path d="M583.85 245.8 V219.7 H652.85" fill="none" stroke="#8c8c8c" stroke-width="1.3"/>
<path d="M583.85 244.8 H651.85 V219.7" fill="none" stroke="#9a9a9a" stroke-width="2"/>
<text x="618.35" y="233.75" font-family='"Liberation Sans", sans-serif' font-size="16" font-weight="bold" fill="#7b8596" text-anchor="middle" dominant-baseline="central" textLength="23.58" lengthAdjust="spacingAndGlyphs" >0.0</text>
<text x="618.35" y="262.5" font-family='"Liberation Sans", sans-serif' font-size="16" font-weight="bold" fill="#fff" text-anchor="middle" dominant-baseline="central" textLength="61.25" lengthAdjust="spacingAndGlyphs" >Current</text>
<rect x="583.85" y="270.8" width="69.00" height="27.20" fill="#fff" />
<path d="M583.85 298 V270.8 H652.85" fill="none" stroke="#8c8c8c" stroke-width="1.3"/>
<path d="M583.85 297 H651.85 V270.8" fill="none" stroke="#9a9a9a" stroke-width="2"/>
<text x="618.35" y="285.4" font-family='"Liberation Sans", sans-serif' font-size="16" font-weight="bold" fill="#000" text-anchor="middle" dominant-baseline="central" textLength="23.58" lengthAdjust="spacingAndGlyphs" >0.0</text>
<line x1="590" y1="196.5" x2="646.5" y2="196.5" stroke="#fff" stroke-width="1.6"/>
<rect x="1263.6" y="177.2" width="82.80000000000018" height="129.5" rx="5" fill="none" stroke="#e6e6e6" stroke-width="1.2"/>
<text x="1305.0" y="188" font-family='"Liberation Sans", sans-serif' font-size="16" font-weight="bold" fill="#fff" text-anchor="middle" dominant-baseline="central" textLength="55.28" lengthAdjust="spacingAndGlyphs" >Vol.mL</text>
<text x="1305.0" y="211" font-family='"Liberation Sans", sans-serif' font-size="16" font-weight="bold" fill="#fff" text-anchor="middle" dominant-baseline="central" textLength="68.79" lengthAdjust="spacingAndGlyphs" >SetPoint</text>
<rect x="1270.5" y="219.7" width="69.00" height="25.90" fill="#fff" />
<path d="M1270.5 245.6 V219.7 H1339.5" fill="none" stroke="#8c8c8c" stroke-width="1.3"/>
<path d="M1270.5 244.6 H1338.5 V219.7" fill="none" stroke="#9a9a9a" stroke-width="2"/>
<text x="1305.0" y="233.64999999999998" font-family='"Liberation Sans", sans-serif' font-size="16" font-weight="bold" fill="#7b8596" text-anchor="middle" dominant-baseline="central" textLength="23.58" lengthAdjust="spacingAndGlyphs" >0.0</text>
<text x="1305.0" y="262.5" font-family='"Liberation Sans", sans-serif' font-size="16" font-weight="bold" fill="#fff" text-anchor="middle" dominant-baseline="central" textLength="61.25" lengthAdjust="spacingAndGlyphs" >Current</text>
<rect x="1270.5" y="271" width="69.00" height="27.30" fill="#fff" />
<path d="M1270.5 298.3 V271 H1339.5" fill="none" stroke="#8c8c8c" stroke-width="1.3"/>
<path d="M1270.5 297.3 H1338.5 V271" fill="none" stroke="#9a9a9a" stroke-width="2"/>
<text x="1305.0" y="285.65" font-family='"Liberation Sans", sans-serif' font-size="16" font-weight="bold" fill="#000" text-anchor="middle" dominant-baseline="central" textLength="23.58" lengthAdjust="spacingAndGlyphs" >0.0</text>
<line x1="1277" y1="196.5" x2="1333.5" y2="196.5" stroke="#fff" stroke-width="1.6"/>
<path d="M660 244 H679" fill="none" stroke="#e6e6e6" stroke-width="1.2"/>
<path d="M1263.6 244 H1239" fill="none" stroke="#e6e6e6" stroke-width="1.2"/>
<rect x="1023.7" y="176" width="27.40" height="26.00" fill="#9a9a9a" stroke="#111" stroke-width="1" />
<rect x="1025.5" y="177.5" width="7.20" height="23.00" fill="#fff" />
<rect x="1034.3" y="177.5" width="7.20" height="23.00" fill="#fff" />
<rect x="1043.1" y="177.5" width="7.20" height="23.00" fill="#fff" />
<rect x="1029.5" y="202" width="16.00" height="6.00" fill="#f4f4f4" stroke="#aaa" stroke-width="0.8" />
<rect x="1012.2" y="208" width="50.30" height="5.50" fill="#e6e6e6" stroke="#8a8a8a" stroke-width="1" />
<rect x="1024.0" y="213.5" width="27.90" height="130.80" fill="#e2e2e2" stroke="#8a8a8a" stroke-width="1.4" rx="2" />
<rect x="1029.1" y="214.5" width="15.80" height="8.50" fill="#fff" />
<rect x="1026.5" y="310" width="22.00" height="29.30" fill="#fff" />
<rect x="1033.0" y="344.3" width="9.00" height="9.00" fill="#ececec" stroke="#999" stroke-width="0.8" />
<text x="1038.0" y="266.5" font-family='"Liberation Sans", sans-serif' font-size="15" font-weight="bold" fill="#e8161e" text-anchor="middle" dominant-baseline="central" textLength="57" lengthAdjust="spacingAndGlyphs" transform="rotate(-90 1038.0 266.5)" stroke="#e8161e" stroke-width="0.5">Strata X</text>
<rect x="686.2" y="473" width="27.40" height="26.00" fill="#9a9a9a" stroke="#111" stroke-width="1" />
<rect x="688.0" y="474.5" width="7.20" height="23.00" fill="#fff" />
<rect x="696.8" y="474.5" width="7.20" height="23.00" fill="#fff" />
<rect x="705.6" y="474.5" width="7.20" height="23.00" fill="#fff" />
<rect x="692" y="499" width="16.00" height="6.00" fill="#f4f4f4" stroke="#aaa" stroke-width="0.8" />
<rect x="674.7" y="505" width="50.30" height="5.50" fill="#e6e6e6" stroke="#8a8a8a" stroke-width="1" />
<rect x="686.5" y="510.5" width="27.90" height="131.10" fill="#e2e2e2" stroke="#8a8a8a" stroke-width="1.4" rx="2" />
<rect x="691.6" y="511.5" width="15.80" height="8.50" fill="#fff" />
<rect x="689" y="607.5" width="22.00" height="29.10" fill="#fff" />
<rect x="695.5" y="641.6" width="9.00" height="9.00" fill="#ececec" stroke="#999" stroke-width="0.8" />
<text x="700.5" y="564.5" font-family='"Liberation Sans", sans-serif' font-size="15" font-weight="bold" fill="#0e1b8f" text-anchor="middle" dominant-baseline="central" textLength="75" lengthAdjust="spacingAndGlyphs" transform="rotate(-90 700.5 564.5)" stroke="#0e1b8f" stroke-width="0.5">Strata SCX</text>
<rect x="1010.6" y="517" width="55.00" height="75.80" fill="#efefef" stroke="#505050" stroke-width="1.2" rx="8" />
<rect x="1020.7" y="592.8" width="35.10" height="12.20" fill="#ececec" stroke="#505050" stroke-width="1" />
<rect x="1011.5" y="605" width="52.00" height="19.00" fill="#f4e41e" stroke="#8a7a00" stroke-width="1.2" rx="5" />
<rect x="1035.5" y="624" width="5.00" height="5.40" fill="#e0e0e0" stroke="#777" stroke-width="0.6" />
<rect x="1023.7" y="629.4" width="28.30" height="26.90" fill="#f2e31a" stroke="#8a7a00" stroke-width="1" />
<line x1="1031" y1="630.5" x2="1031" y2="655" stroke="#8a7a00" stroke-width="0.9" opacity="0.6"/>
<line x1="1038" y1="630.5" x2="1038" y2="655" stroke="#8a7a00" stroke-width="0.9" opacity="0.6"/>
<line x1="1045" y1="630.5" x2="1045" y2="655" stroke="#8a7a00" stroke-width="0.9" opacity="0.6"/>
<text x="1038" y="553" font-family='"Liberation Sans", sans-serif' font-size="14.5" font-weight="bold" fill="#000" text-anchor="middle" dominant-baseline="central" textLength="52" lengthAdjust="spacingAndGlyphs" transform="rotate(-90 1038 553)" stroke="#000" stroke-width="0.5">Ethanol</text>
<rect x="1100.1" y="517" width="55.00" height="75.80" fill="#efefef" stroke="#505050" stroke-width="1.2" rx="8" />
<rect x="1110.2" y="592.8" width="35.10" height="12.20" fill="#ececec" stroke="#505050" stroke-width="1" />
<rect x="1101.0" y="605" width="52.00" height="19.00" fill="#1a1ac4" stroke="#0a0a60" stroke-width="1.2" rx="5" />
<rect x="1125.0" y="624" width="5.00" height="5.40" fill="#e0e0e0" stroke="#777" stroke-width="0.6" />
<rect x="1113.2" y="629.4" width="28.30" height="26.90" fill="#2030c8" stroke="#0a0a60" stroke-width="1" />
<line x1="1120.5" y1="630.5" x2="1120.5" y2="655" stroke="#0a0a60" stroke-width="0.9" opacity="0.6"/>
<line x1="1127.5" y1="630.5" x2="1127.5" y2="655" stroke="#0a0a60" stroke-width="0.9" opacity="0.6"/>
<line x1="1134.5" y1="630.5" x2="1134.5" y2="655" stroke="#0a0a60" stroke-width="0.9" opacity="0.6"/>
<text x="1127.5" y="553" font-family='"Liberation Sans", sans-serif' font-size="14.5" font-weight="bold" fill="#000" text-anchor="middle" dominant-baseline="central" textLength="43" lengthAdjust="spacingAndGlyphs" transform="rotate(-90 1127.5 553)" stroke="#000" stroke-width="0.5">Saline</text>
<rect x="1190.1" y="517" width="55.00" height="75.80" fill="#efefef" stroke="#505050" stroke-width="1.2" rx="8" />
<rect x="1200.2" y="592.8" width="35.10" height="12.20" fill="#ececec" stroke="#505050" stroke-width="1" />
<rect x="1191.0" y="605" width="52.00" height="19.00" fill="#0f8a25" stroke="#064010" stroke-width="1.2" rx="5" />
<rect x="1215.0" y="624" width="5.00" height="5.40" fill="#e0e0e0" stroke="#777" stroke-width="0.6" />
<rect x="1203.2" y="629.4" width="28.30" height="26.90" fill="#119a2a" stroke="#064010" stroke-width="1" />
<line x1="1210.5" y1="630.5" x2="1210.5" y2="655" stroke="#064010" stroke-width="0.9" opacity="0.6"/>
<line x1="1217.5" y1="630.5" x2="1217.5" y2="655" stroke="#064010" stroke-width="0.9" opacity="0.6"/>
<line x1="1224.5" y1="630.5" x2="1224.5" y2="655" stroke="#064010" stroke-width="0.9" opacity="0.6"/>
<text x="1217.5" y="553" font-family='"Liberation Sans", sans-serif' font-size="14.5" font-weight="bold" fill="#000" text-anchor="middle" dominant-baseline="central" textLength="43" lengthAdjust="spacingAndGlyphs" transform="rotate(-90 1217.5 553)" stroke="#000" stroke-width="0.5">Water</text>
<clipPath id="clip1"><rect x="645" y="549.3" width="41.5" height="60"/></clipPath>
<g clip-path="url(#clip1)">
<circle cx="675" cy="579.3" r="20.5" fill="#000"/>
<circle cx="675" cy="579.3" r="18.5" fill="url(#radblk)"/>
<path d="M671.40 573.06 L665.75 563.28 A18.5 18.5 0 0 1 684.25 563.28 L678.60 573.06 A7.2 7.2 0 0 0 671.40 573.06 Z" fill="url(#radg)" stroke="#000" stroke-width="0.8"/>
<path d="M682.20 579.30 L693.50 579.30 A18.5 18.5 0 0 1 684.25 595.32 L678.60 585.54 A7.2 7.2 0 0 0 682.20 579.30 Z" fill="url(#radg)" stroke="#000" stroke-width="0.8"/>
<path d="M671.40 585.54 L665.75 595.32 A18.5 18.5 0 0 1 656.50 579.30 L667.80 579.30 A7.2 7.2 0 0 0 671.40 585.54 Z" fill="url(#radg)" stroke="#000" stroke-width="0.8"/>
<rect x="657" y="570.3" width="36" height="3" fill="#000" opacity="0.35"/>
<circle cx="675" cy="579.3" r="5.5" fill="#111" stroke="#c8a000" stroke-width="0.7"/>
</g>
<text x="658.5" y="557.0" font-family='"Liberation Sans", sans-serif' font-size="14" font-weight="normal" fill="#fff" text-anchor="middle" dominant-baseline="central" textLength="7.94" lengthAdjust="spacingAndGlyphs" >1</text>
<clipPath id="clip3"><rect x="982" y="258.5" width="41.5" height="60"/></clipPath>
<g clip-path="url(#clip3)">
<circle cx="1012" cy="288.5" r="20.5" fill="#000"/>
<circle cx="1012" cy="288.5" r="18.5" fill="url(#radblk)"/>
<path d="M1008.40 282.26 L1002.75 272.48 A18.5 18.5 0 0 1 1021.25 272.48 L1015.60 282.26 A7.2 7.2 0 0 0 1008.40 282.26 Z" fill="url(#radg)" stroke="#000" stroke-width="0.8"/>
<path d="M1019.20 288.50 L1030.50 288.50 A18.5 18.5 0 0 1 1021.25 304.52 L1015.60 294.74 A7.2 7.2 0 0 0 1019.20 288.50 Z" fill="url(#radg)" stroke="#000" stroke-width="0.8"/>
<path d="M1008.40 294.74 L1002.75 304.52 A18.5 18.5 0 0 1 993.50 288.50 L1004.80 288.50 A7.2 7.2 0 0 0 1008.40 294.74 Z" fill="url(#radg)" stroke="#000" stroke-width="0.8"/>
<rect x="994" y="279.5" width="36" height="3" fill="#000" opacity="0.35"/>
<circle cx="1012" cy="288.5" r="5.5" fill="#111" stroke="#c8a000" stroke-width="0.7"/>
</g>
<text x="995.5" y="266.2" font-family='"Liberation Sans", sans-serif' font-size="14" font-weight="normal" fill="#fff" text-anchor="middle" dominant-baseline="central" textLength="7.94" lengthAdjust="spacingAndGlyphs" >3</text>
<clipPath id="clip2"><rect x="863" y="805" width="44.60000000000002" height="60"/></clipPath>
<g clip-path="url(#clip2)">
<circle cx="893" cy="835" r="20.5" fill="#000"/>
<circle cx="893" cy="835" r="18.5" fill="url(#radblk)"/>
<path d="M889.40 828.76 L883.75 818.98 A18.5 18.5 0 0 1 902.25 818.98 L896.60 828.76 A7.2 7.2 0 0 0 889.40 828.76 Z" fill="url(#radg)" stroke="#000" stroke-width="0.8"/>
<path d="M900.20 835.00 L911.50 835.00 A18.5 18.5 0 0 1 902.25 851.02 L896.60 841.24 A7.2 7.2 0 0 0 900.20 835.00 Z" fill="url(#radg)" stroke="#000" stroke-width="0.8"/>
<path d="M889.40 841.24 L883.75 851.02 A18.5 18.5 0 0 1 874.50 835.00 L885.80 835.00 A7.2 7.2 0 0 0 889.40 841.24 Z" fill="url(#radg)" stroke="#000" stroke-width="0.8"/>
<rect x="875" y="826" width="36" height="3" fill="#000" opacity="0.35"/>
<circle cx="893" cy="835" r="5.5" fill="#111" stroke="#c8a000" stroke-width="0.7"/>
</g>
<text x="876.5" y="812.7" font-family='"Liberation Sans", sans-serif' font-size="14" font-weight="normal" fill="#fff" text-anchor="middle" dominant-baseline="central" textLength="7.94" lengthAdjust="spacingAndGlyphs" >2</text>
<circle cx="543.3" cy="216" r="17" fill="#fafafa" stroke="#000" stroke-width="1.2"/>
<circle cx="543.3" cy="216" r="12.3" fill="none" stroke="#8a8a8a" stroke-width="1.5"/>
<circle cx="1376" cy="216" r="17" fill="#fafafa" stroke="#000" stroke-width="1.2"/>
<circle cx="1376" cy="216" r="12.3" fill="none" stroke="#8a8a8a" stroke-width="1.5"/>
<circle cx="542.7" cy="511" r="17" fill="#fafafa" stroke="#000" stroke-width="1.2"/>
<circle cx="542.7" cy="511" r="12.3" fill="none" stroke="#8a8a8a" stroke-width="1.5"/>
<circle cx="959.6" cy="511" r="17" fill="#fafafa" stroke="#000" stroke-width="1.2"/>
<circle cx="959.6" cy="511" r="12.3" fill="none" stroke="#8a8a8a" stroke-width="1.5"/>
<circle cx="1376.5" cy="510.5" r="17" fill="#fafafa" stroke="#000" stroke-width="1.2"/>
<circle cx="1376.5" cy="510.5" r="12.3" fill="none" stroke="#8a8a8a" stroke-width="1.5"/>
<rect x="531.75" y="167.75" width="26.50" height="26.50" fill="#7a7a7a" stroke="#f4f4f4" stroke-width="1.5" />
<text x="545.0" y="181.5" font-family='"Liberation Sans", sans-serif' font-size="16" font-weight="bold" fill="#fff" text-anchor="middle" dominant-baseline="central" textLength="22" lengthAdjust="spacingAndGlyphs" >G1</text>
<rect x="1364.75" y="167.75" width="26.50" height="26.50" fill="#7a7a7a" stroke="#f4f4f4" stroke-width="1.5" />
<text x="1378.0" y="181.5" font-family='"Liberation Sans", sans-serif' font-size="16" font-weight="bold" fill="#fff" text-anchor="middle" dominant-baseline="central" textLength="26" lengthAdjust="spacingAndGlyphs" >W2</text>
<rect x="529.75" y="462.75" width="26.50" height="26.50" fill="#7a7a7a" stroke="#f4f4f4" stroke-width="1.5" />
<text x="543.0" y="476.5" font-family='"Liberation Sans", sans-serif' font-size="16" font-weight="bold" fill="#fff" text-anchor="middle" dominant-baseline="central" textLength="25" lengthAdjust="spacingAndGlyphs" >W1</text>
<rect x="946.75" y="462.75" width="25.80" height="26.00" fill="#7a7a7a" stroke="#f4f4f4" stroke-width="1.5" />
<text x="959.65" y="476.25" font-family='"Liberation Sans", sans-serif' font-size="16" font-weight="bold" fill="#fff" text-anchor="middle" dominant-baseline="central" textLength="11.5" lengthAdjust="spacingAndGlyphs" >R</text>
<rect x="1364.75" y="463.35" width="26.50" height="25.20" fill="#7a7a7a" stroke="#f4f4f4" stroke-width="1.5" />
<text x="1378.0" y="476.45000000000005" font-family='"Liberation Sans", sans-serif' font-size="16" font-weight="bold" fill="#fff" text-anchor="middle" dominant-baseline="central" textLength="22.5" lengthAdjust="spacingAndGlyphs" >G2</text>
<text x="254.6" y="489" font-family='"Liberation Sans", sans-serif' font-size="16" font-weight="bold" fill="#fff" text-anchor="end" dominant-baseline="central" textLength="47.12" lengthAdjust="spacingAndGlyphs" >Rad1:</text>
<rect x="259" y="470.8" width="89.60" height="35.70" fill="#000" />
<path d="M259.8 506.5 V471.6 H348.6" fill="none" stroke="#f0f0f0" stroke-width="1.6"/>
<path d="M259 505.7 H347.8 V470.8" fill="none" stroke="#9a9a9a" stroke-width="1.8"/>
<text x="303.8" y="489.15" font-family='"Liberation Sans", sans-serif' font-size="16" font-weight="bold" fill="#fff" text-anchor="middle" dominant-baseline="central" textLength="9.43" lengthAdjust="spacingAndGlyphs" >0</text>
<text x="350" y="490" font-family='"Liberation Sans", sans-serif' font-size="16" font-weight="bold" fill="#fff" text-anchor="start" dominant-baseline="central" textLength="32.04" lengthAdjust="spacingAndGlyphs" >mCi</text>
<text x="1473.3" y="489.3" font-family='"Liberation Sans", sans-serif' font-size="16" font-weight="bold" fill="#fff" text-anchor="end" dominant-baseline="central" textLength="47.12" lengthAdjust="spacingAndGlyphs" >Rad3:</text>
<rect x="1478.4" y="471.6" width="88.70" height="34.50" fill="#000" />
<path d="M1479.2 506.1 V472.40000000000003 H1567.1" fill="none" stroke="#f0f0f0" stroke-width="1.6"/>
<path d="M1478.4 505.3 H1566.3 V471.6" fill="none" stroke="#9a9a9a" stroke-width="1.8"/>
<text x="1522.75" y="489.35" font-family='"Liberation Sans", sans-serif' font-size="16" font-weight="bold" fill="#fff" text-anchor="middle" dominant-baseline="central" textLength="9.43" lengthAdjust="spacingAndGlyphs" >0</text>
<text x="1567.5" y="490" font-family='"Liberation Sans", sans-serif' font-size="16" font-weight="bold" fill="#fff" text-anchor="start" dominant-baseline="central" textLength="32.04" lengthAdjust="spacingAndGlyphs" >mCi</text>
<path d="M907.6 820.4 H928 V887 H991.9 V820.4 H1012.2 V904 H907.6 Z" fill="#dcdcdc" stroke="#a0a0a0" stroke-width="1"/>
<path d="M931.7 803 V871 Q931.7 883.3 944 883.3 H975 Q987.2 883.3 987.2 871 V803 Z" fill="#efefef" stroke="#6a6a6a" stroke-width="1.2"/>
<polygon points="936,795.5 951.5,789.3 967.5,789.3 983,795.5" fill="#e8e8e8" stroke="#777" stroke-width="1"/>
<rect x="923" y="795.2" width="69.80" height="7.90" fill="#e6e6e6" stroke="#6a6a6a" stroke-width="1" />
<rect x="952" y="774" width="13.00" height="15.50" fill="#e8e8e8" stroke="#888" stroke-width="1" />
<rect x="944.6" y="748" width="27.30" height="26.00" fill="#9a9a9a" stroke="#111" stroke-width="1" />
<rect x="946.4" y="749.5" width="4.98" height="23.00" fill="#fff" />
<rect x="952.9749999999999" y="749.5" width="4.98" height="23.00" fill="#fff" />
<rect x="959.55" y="749.5" width="4.98" height="23.00" fill="#fff" />
<rect x="966.125" y="749.5" width="4.98" height="23.00" fill="#fff" />
<g transform="rotate(32 991 776)">
<rect x="985.5" y="789" width="11.00" height="13.00" fill="#ececec" stroke="#888" stroke-width="1" />
<rect x="977.5" y="763" width="27.00" height="26.00" fill="#9a9a9a" stroke="#111" stroke-width="1" />
<rect x="979.3" y="764.5" width="4.90" height="23.00" fill="#fff" />
<rect x="985.8" y="764.5" width="4.90" height="23.00" fill="#fff" />
<rect x="992.3" y="764.5" width="4.90" height="23.00" fill="#fff" />
<rect x="998.8" y="764.5" width="4.90" height="23.00" fill="#fff" />
</g>
<path d="M1012.2 844.4 H1032.6" fill="none" stroke="#e6e6e6" stroke-width="1.2"/>
<rect x="1032.6" y="774" width="83.4" height="130" rx="5" fill="none" stroke="#e6e6e6" stroke-width="1.2"/>
<text x="1074.3" y="787.4" font-family='"Liberation Sans", sans-serif' font-size="16" font-weight="bold" fill="#fff" text-anchor="middle" dominant-baseline="central" textLength="63.01" lengthAdjust="spacingAndGlyphs" >Temp°C</text>
<line x1="1043" y1="795.5" x2="1106" y2="795.5" stroke="#fff" stroke-width="1.6"/>
<text x="1074.3" y="807.8" font-family='"Liberation Sans", sans-serif' font-size="16" font-weight="bold" fill="#fff" text-anchor="middle" dominant-baseline="central" textLength="68.79" lengthAdjust="spacingAndGlyphs" >SetPoint</text>
<rect x="1040" y="817" width="66.70" height="27.80" fill="#fff" />
<path d="M1040 844.8 V817 H1106.7" fill="none" stroke="#8c8c8c" stroke-width="1.3"/>
<path d="M1040 843.8 H1105.7 V817" fill="none" stroke="#9a9a9a" stroke-width="2"/>
<text x="1073.35" y="831.9" font-family='"Liberation Sans", sans-serif' font-size="16" font-weight="bold" fill="#7b8596" text-anchor="middle" dominant-baseline="central" textLength="23.58" lengthAdjust="spacingAndGlyphs" >0.0</text>
<text x="1074.3" y="859.6" font-family='"Liberation Sans", sans-serif' font-size="16" font-weight="bold" fill="#fff" text-anchor="middle" dominant-baseline="central" textLength="61.25" lengthAdjust="spacingAndGlyphs" >Current</text>
<rect x="1040" y="868.9" width="66.70" height="27.40" fill="#fff" />
<path d="M1040 896.3 V868.9 H1106.7" fill="none" stroke="#8c8c8c" stroke-width="1.3"/>
<path d="M1040 895.3 H1105.7 V868.9" fill="none" stroke="#9a9a9a" stroke-width="2"/>
<text x="1073.35" y="883.5999999999999" font-family='"Liberation Sans", sans-serif' font-size="16" font-weight="bold" fill="#000" text-anchor="middle" dominant-baseline="central" textLength="33.01" lengthAdjust="spacingAndGlyphs" >24.4</text>
<text x="809.4" y="852" font-family='"Liberation Sans", sans-serif' font-size="16" font-weight="bold" fill="#fff" text-anchor="start" dominant-baseline="central" textLength="32.04" lengthAdjust="spacingAndGlyphs" >mCi</text>
<rect x="809" y="865.2" width="89.30" height="34.80" fill="#000" />
<path d="M809.8 900 V866.0 H898.3" fill="none" stroke="#f0f0f0" stroke-width="1.6"/>
<path d="M809 899.2 H897.5 V865.2" fill="none" stroke="#9a9a9a" stroke-width="1.8"/>
<text x="853.65" y="883.1" font-family='"Liberation Sans", sans-serif' font-size="16" font-weight="bold" fill="#fff" text-anchor="middle" dominant-baseline="central" textLength="9.43" lengthAdjust="spacingAndGlyphs" >0</text>
<line x1="1553.4" y1="212.7" x2="1546" y2="226" stroke="#9a9a9a" stroke-width="2.2"/>
<g transform="rotate(23 1558 196.5)"><rect x="1550.5" y="180" width="15" height="33" fill="#fafafa" stroke="#555" stroke-width="1.2"/></g>
<g transform="translate(1500.5 185.2) rotate(-28)">
<polygon points="-9,8 9,8 1.8,38 -1.8,38" fill="#5cc87a" stroke="#1f7a35" stroke-width="1"/>
<rect x="-6" y="3" width="12.00" height="6.00" fill="#fafafa" stroke="#999" stroke-width="0.8" />
<rect x="-6.5" y="-12" width="13.00" height="9.00" fill="#f4f4f4" stroke="#999" stroke-width="0.8" />
<rect x="-33" y="-3.8" width="66.00" height="7.60" fill="#e6de1a" stroke="#8a8000" stroke-width="1.2" />
<rect x="-14.5" y="-38" width="29.00" height="27.00" fill="#9a9a9a" stroke="#111" stroke-width="1" />
<rect x="-12.7" y="-36.5" width="5.40" height="24.00" fill="#fff" />
<rect x="-5.7" y="-36.5" width="5.40" height="24.00" fill="#fff" />
<rect x="1.3" y="-36.5" width="5.40" height="24.00" fill="#fff" />
<rect x="8.3" y="-36.5" width="5.40" height="24.00" fill="#fff" />
</g>
<rect x="1508" y="253" width="54.8" height="77.8" rx="9" fill="#efefef" stroke="#505050" stroke-width="1.2"/>
<rect x="1516" y="242" width="35.00" height="12.00" fill="#e6e6e6" stroke="#666" stroke-width="1" />
<rect x="1508" y="224" width="53" height="18" rx="6" fill="#7a7a7a" stroke="#444" stroke-width="1"/>
<line x1="1520" y1="243" x2="1552" y2="289" stroke="#9a9a9a" stroke-width="3"/>
<line x1="1543" y1="243" x2="1525" y2="262" stroke="#9a9a9a" stroke-width="2.5"/>
<text x="1535.5" y="295" font-family='"Liberation Sans", sans-serif' font-size="14.5" font-weight="bold" fill="#000" text-anchor="middle" dominant-baseline="central" textLength="54" lengthAdjust="spacingAndGlyphs" transform="rotate(-90 1535.5 295)" stroke="#000" stroke-width="0.5">Product</text>
<rect x="1733.5" y="352.5" width="63.20" height="51.70" fill="#8a8a8a" stroke="#000" stroke-width="1.2" />
<rect x="1734.5" y="362" width="61.20" height="32.00" fill="#a0a0a0" />
<rect x="1734.5" y="370" width="61.20" height="16.00" fill="#909090" />
<rect x="1715" y="352.5" width="18.50" height="51.70" fill="#fafafa" stroke="#000" stroke-width="1.2" />
<line x1="1715" y1="362" x2="1733.5" y2="362" stroke="#000" stroke-width="1"/>
<line x1="1715" y1="393.3" x2="1733.5" y2="393.3" stroke="#000" stroke-width="1"/>
<line x1="1716" y1="357.5" x2="1732.5" y2="357.5" stroke="#e0e0e0" stroke-width="1.5"/>
<line x1="1716" y1="387" x2="1732.5" y2="387" stroke="#e6e6e6" stroke-width="1.5"/>
<rect x="1716" y="405" width="16.50" height="2.50" fill="#000" />
<rect x="1796.7" y="352.5" width="19.10" height="51.70" fill="#fafafa" stroke="#000" stroke-width="1.2" />
<line x1="1796.7" y1="362" x2="1815.8" y2="362" stroke="#000" stroke-width="1"/>
<line x1="1796.7" y1="393.3" x2="1815.8" y2="393.3" stroke="#000" stroke-width="1"/>
<line x1="1797.7" y1="357.5" x2="1814.8" y2="357.5" stroke="#e0e0e0" stroke-width="1.5"/>
<line x1="1797.7" y1="387" x2="1814.8" y2="387" stroke="#e6e6e6" stroke-width="1.5"/>
<rect x="1797.7" y="405" width="17.10" height="2.50" fill="#000" />
<rect x="1713.5" y="353.5" width="2.00" height="5.00" fill="#ccc" stroke="#000" stroke-width="0.6" />
<rect x="1713.5" y="364.0" width="2.00" height="5.00" fill="#ccc" stroke="#000" stroke-width="0.6" />
<rect x="1713.5" y="385.5" width="2.00" height="5.00" fill="#ccc" stroke="#000" stroke-width="0.6" />
<rect x="1713.5" y="395.0" width="2.00" height="5.00" fill="#ccc" stroke="#000" stroke-width="0.6" />
<rect x="1815.8" y="353.5" width="2.00" height="5.00" fill="#ccc" stroke="#000" stroke-width="0.6" />
<rect x="1815.8" y="364.0" width="2.00" height="5.00" fill="#ccc" stroke="#000" stroke-width="0.6" />
<rect x="1815.8" y="385.5" width="2.00" height="5.00" fill="#ccc" stroke="#000" stroke-width="0.6" />
<rect x="1815.8" y="395.0" width="2.00" height="5.00" fill="#ccc" stroke="#000" stroke-width="0.6" />
<rect x="1744.2" y="356.3" width="42.90" height="42.00" fill="#c8c8c8" stroke="#000" stroke-width="1.2" />
<circle cx="1765.8" cy="377.5" r="19.3" fill="#262626" stroke="#555" stroke-width="0.8"/>
<rect x="1769.5" y="374.5" width="13.5" height="6" rx="2.5" fill="#cdcdcd" stroke="#222" stroke-width="0.6" transform="rotate(0 1765.8 377.5)"/>
<rect x="1769.5" y="374.5" width="13.5" height="6" rx="2.5" fill="#cdcdcd" stroke="#222" stroke-width="0.6" transform="rotate(60 1765.8 377.5)"/>
<rect x="1769.5" y="374.5" width="13.5" height="6" rx="2.5" fill="#cdcdcd" stroke="#222" stroke-width="0.6" transform="rotate(120 1765.8 377.5)"/>
<rect x="1769.5" y="374.5" width="13.5" height="6" rx="2.5" fill="#cdcdcd" stroke="#222" stroke-width="0.6" transform="rotate(180 1765.8 377.5)"/>
<rect x="1769.5" y="374.5" width="13.5" height="6" rx="2.5" fill="#cdcdcd" stroke="#222" stroke-width="0.6" transform="rotate(240 1765.8 377.5)"/>
<rect x="1769.5" y="374.5" width="13.5" height="6" rx="2.5" fill="#cdcdcd" stroke="#222" stroke-width="0.6" transform="rotate(300 1765.8 377.5)"/>
<circle cx="1765.8" cy="377.5" r="5" fill="#d8d8d8" stroke="#333" stroke-width="0.6"/>
<rect x="1764.3" y="376" width="3.00" height="3.00" fill="#8a8a8a" />
<line x1="1815.8" y1="379.2" x2="1834" y2="379.2" stroke="#dcdcdc" stroke-width="2.5"/>
<polygon points="1833.3,363.7 1853.7,377.5 1833.3,390" fill="#fff" stroke="#111" stroke-width="1"/>
<rect x="1671" y="470.7" width="82.5" height="129" rx="5" fill="none" stroke="#e6e6e6" stroke-width="1.2"/>
<text x="1712.3" y="480.5" font-family='"Liberation Sans", sans-serif' font-size="16" font-weight="bold" fill="#fff" text-anchor="middle" dominant-baseline="central" textLength="65.06" lengthAdjust="spacingAndGlyphs" >Vac. bar</text>
<line x1="1681" y1="488" x2="1745" y2="488" stroke="#fff" stroke-width="1.6"/>
<text x="1712.3" y="500" font-family='"Liberation Sans", sans-serif' font-size="16" font-weight="bold" fill="#fff" text-anchor="middle" dominant-baseline="central" textLength="68.79" lengthAdjust="spacingAndGlyphs" >SetPoint</text>
<rect x="1678" y="509.8" width="66.60" height="26.60" fill="#fff" />
<path d="M1678 536.4 V509.8 H1744.6" fill="none" stroke="#8c8c8c" stroke-width="1.3"/>
<path d="M1678 535.4 H1743.6 V509.8" fill="none" stroke="#9a9a9a" stroke-width="2"/>
<text x="1711.3" y="524.1" font-family='"Liberation Sans", sans-serif' font-size="16" font-weight="bold" fill="#7b8596" text-anchor="middle" dominant-baseline="central" textLength="33.01" lengthAdjust="spacingAndGlyphs" >0.00</text>
<text x="1712.3" y="551" font-family='"Liberation Sans", sans-serif' font-size="16" font-weight="bold" fill="#fff" text-anchor="middle" dominant-baseline="central" textLength="61.25" lengthAdjust="spacingAndGlyphs" >Current</text>
<rect x="1678" y="561" width="66.60" height="30.50" fill="#fff" />
<path d="M1678 591.5 V561 H1744.6" fill="none" stroke="#8c8c8c" stroke-width="1.3"/>
<path d="M1678 590.5 H1743.6 V561" fill="none" stroke="#9a9a9a" stroke-width="2"/>
<text x="1711.3" y="577.25" font-family='"Liberation Sans", sans-serif' font-size="16" font-weight="bold" fill="#000" text-anchor="middle" dominant-baseline="central" textLength="38.66" lengthAdjust="spacingAndGlyphs" >-0.01</text>
<path d="M1715.6 600 V634.3 H1785" fill="none" stroke="#e6e6e6" stroke-width="1.2"/>
<path d="M1693.6 778 V786 L1683 792 L1679 801 V893 L1684 903.8 H1750 L1755 893 V801 L1751 792 L1740 786 V778 Z" fill="#eeeeee" stroke="#a8a8a8" stroke-width="1"/>
<path d="M1694 787 L1685 793 L1683 800 H1751 L1749 793 L1740 787 Z" fill="#fafafa"/>
<line x1="1680" y1="797.5" x2="1754" y2="797.5" stroke="#cfcfcf" stroke-width="1"/>
<line x1="1687" y1="812" x2="1687" y2="858" stroke="#fff" stroke-width="2.5"/>
<line x1="1741" y1="804" x2="1741" y2="855" stroke="#fff" stroke-width="3"/>
<line x1="1733" y1="812" x2="1733" y2="852" stroke="#fff" stroke-width="1.5"/>
<path d="M1680 893 L1685 899 H1749 L1754 893" fill="none" stroke="#d4d4d4" stroke-width="2"/>
<line x1="1706.2" y1="778" x2="1706.2" y2="808" stroke="#9a9a9a" stroke-width="2.5"/>
<line x1="1727.5" y1="778" x2="1727.5" y2="786.5" stroke="#9a9a9a" stroke-width="2.5"/>
<line x1="1689.5" y1="808" x2="1689.5" y2="879" stroke="#b4b4b4" stroke-width="1.1"/>
<line x1="1692.5" y1="808" x2="1692.5" y2="872" stroke="#b4b4b4" stroke-width="1.1"/>
<rect x="1688.6" y="751.5" width="55.70" height="26.70" fill="url(#capblue)" stroke="#0a0a80" stroke-width="1" />
<text x="1717" y="880.5" font-family='"Liberation Sans", sans-serif' font-size="16" font-weight="bold" fill="#000" text-anchor="middle" dominant-baseline="central" textLength="49.32" lengthAdjust="spacingAndGlyphs" >Waste</text>
<path d="M344 216 H440 C455 216 462 220 475 230 L570 307 C585 320 595 333 612 333 H695 Q701 333 701 327" fill="none" stroke="#000" stroke-width="5" stroke-linejoin="round"/>
<path d="M344 216 H440 C455 216 462 220 475 230 L570 307 C585 320 595 333 612 333 H695 Q701 333 701 327" fill="none" stroke="#b8b8b8" stroke-width="3" stroke-linejoin="round"/>
<path d="M273 249 M280 252 H395 C410 252 418 258 430 267 L560 365 C575 378 585 387 600 387 H646" fill="none" stroke="#000" stroke-width="5" stroke-linejoin="round"/>
<path d="M273 249 M280 252 H395 C410 252 418 258 430 267 L560 365 C575 378 585 387 600 387 H646" fill="none" stroke="#b8b8b8" stroke-width="3" stroke-linejoin="round"/>
<path d="M543 216 V277" fill="none" stroke="#000" stroke-width="5" stroke-linejoin="round"/>
<path d="M543 216 V277" fill="none" stroke="#b8b8b8" stroke-width="3" stroke-linejoin="round"/>
<path d="M543 298 V322 C543 335 552 342 565 342 H694 Q700 342 700 349" fill="none" stroke="#000" stroke-width="5" stroke-linejoin="round"/>
<path d="M543 298 V322 C543 335 552 342 565 342 H694 Q700 342 700 349" fill="none" stroke="#b8b8b8" stroke-width="3" stroke-linejoin="round"/>
<path d="M880 336 V322 C880 314 875 310 868 310 H847 C839 310 835 315 835 323 V395 C835 412 826 420 810 426 L740 448 C710 457 698 462 698 475" fill="none" stroke="#000" stroke-width="5" stroke-linejoin="round"/>
<path d="M880 336 V322 C880 314 875 310 868 310 H847 C839 310 835 315 835 323 V395 C835 412 826 420 810 426 L740 448 C710 457 698 462 698 475" fill="none" stroke="#b8b8b8" stroke-width="3" stroke-linejoin="round"/>
<path d="M879 633 V497 C879 478 888 470 905 463 L945 448 C962 441 971 432 971 418 V158 C971 150 976 144 984 144 H1024 C1032 144 1037 150 1037 158 V177" fill="none" stroke="#000" stroke-width="5" stroke-linejoin="round"/>
<path d="M879 633 V497 C879 478 888 470 905 463 L945 448 C962 441 971 432 971 418 V158 C971 150 976 144 984 144 H1024 C1032 144 1037 150 1037 158 V177" fill="none" stroke="#b8b8b8" stroke-width="3" stroke-linejoin="round"/>
<path d="M1127.5 336 V148 C1127.5 136 1135 128 1148 128 H1428 C1445 128 1460 132 1468 138 L1481 153" fill="none" stroke="#000" stroke-width="5" stroke-linejoin="round"/>
<path d="M1127.5 336 V148 C1127.5 136 1135 128 1148 128 H1428 C1445 128 1460 132 1468 138 L1481 153" fill="none" stroke="#b8b8b8" stroke-width="3" stroke-linejoin="round"/>
<path d="M1376 216 V358 C1376 375 1367 385 1350 385 H1279" fill="none" stroke="#000" stroke-width="5" stroke-linejoin="round"/>
<path d="M1376 216 V358 C1376 375 1367 385 1350 385 H1279" fill="none" stroke="#b8b8b8" stroke-width="3" stroke-linejoin="round"/>
<path d="M543 511 V654 C543 672 554 681 572 681 H642" fill="none" stroke="#000" stroke-width="5" stroke-linejoin="round"/>
<path d="M543 511 V654 C543 672 554 681 572 681 H642" fill="none" stroke="#b8b8b8" stroke-width="3" stroke-linejoin="round"/>
<path d="M789.5 633 V595 C789.5 586 795 580 805 580 H871" fill="none" stroke="#000" stroke-width="5" stroke-linejoin="round"/>
<path d="M789.5 633 V595 C789.5 586 795 580 805 580 H871" fill="none" stroke="#b8b8b8" stroke-width="3" stroke-linejoin="round"/>
<path d="M887 580 H922 C930 580 935 586 935 596 V705 C935 716 941 720 949 726 C956 732 959 736 959 745 V749" fill="none" stroke="#000" stroke-width="5" stroke-linejoin="round"/>
<path d="M887 580 H922 C930 580 935 586 935 596 V705 C935 716 941 720 949 726 C956 732 959 736 959 745 V749" fill="none" stroke="#b8b8b8" stroke-width="3" stroke-linejoin="round"/>
<path d="M959.5 511 V550 C959.5 562 965 568 970 574 C975 580 976.5 584 976.5 592 V704 C976.5 716 988 724 996 732 C1004 740 1005 752 999 763" fill="none" stroke="#000" stroke-width="5" stroke-linejoin="round"/>
<path d="M959.5 511 V550 C959.5 562 965 568 970 574 C975 580 976.5 584 976.5 592 V704 C976.5 716 988 724 996 732 C1004 740 1005 752 999 763" fill="none" stroke="#b8b8b8" stroke-width="3" stroke-linejoin="round"/>
<path d="M1376.5 511 V648 C1376.5 668 1366 681 1346 681 H1279" fill="none" stroke="#000" stroke-width="5" stroke-linejoin="round"/>
<path d="M1376.5 511 V648 C1376.5 668 1366 681 1346 681 H1279" fill="none" stroke="#b8b8b8" stroke-width="3" stroke-linejoin="round"/>
<path d="M138 736.2 H156" fill="none" stroke="#8c8c8c" stroke-width="5.4" stroke-linejoin="miter"/>
<path d="M138 736.2 H156" fill="none" stroke="#c8c8c8" stroke-width="3.4" stroke-linejoin="miter"/>
<path d="M138 736.2 H156" fill="none" stroke="#f2f2f2" stroke-width="1.3" stroke-linejoin="miter"/>
<path d="M156 694 V786.5" fill="none" stroke="#8c8c8c" stroke-width="5.4" stroke-linejoin="miter"/>
<path d="M156 694 V786.5" fill="none" stroke="#c8c8c8" stroke-width="3.4" stroke-linejoin="miter"/>
<path d="M156 694 V786.5" fill="none" stroke="#f2f2f2" stroke-width="1.3" stroke-linejoin="miter"/>
<path d="M156 694 H421" fill="none" stroke="#8c8c8c" stroke-width="5.4" stroke-linejoin="miter"/>
<path d="M156 694 H421" fill="none" stroke="#c8c8c8" stroke-width="3.4" stroke-linejoin="miter"/>
<path d="M156 694 H421" fill="none" stroke="#f2f2f2" stroke-width="1.3" stroke-linejoin="miter"/>
<path d="M305 604 V786.5" fill="none" stroke="#8c8c8c" stroke-width="5.4" stroke-linejoin="miter"/>
<path d="M305 604 V786.5" fill="none" stroke="#c8c8c8" stroke-width="3.4" stroke-linejoin="miter"/>
<path d="M305 604 V786.5" fill="none" stroke="#f2f2f2" stroke-width="1.3" stroke-linejoin="miter"/>
<path d="M305 604 H421" fill="none" stroke="#8c8c8c" stroke-width="5.4" stroke-linejoin="miter"/>
<path d="M305 604 H421" fill="none" stroke="#c8c8c8" stroke-width="3.4" stroke-linejoin="miter"/>
<path d="M305 604 H421" fill="none" stroke="#f2f2f2" stroke-width="1.3" stroke-linejoin="miter"/>
<path d="M156 786.5 H451 L478 809 V900 L500 920 H1475 L1504.5 900 V773" fill="none" stroke="#8c8c8c" stroke-width="5.4" stroke-linejoin="miter"/>
<path d="M156 786.5 H451 L478 809 V900 L500 920 H1475 L1504.5 900 V773" fill="none" stroke="#c8c8c8" stroke-width="3.4" stroke-linejoin="miter"/>
<path d="M156 786.5 H451 L478 809 V900 L500 920 H1475 L1504.5 900 V773" fill="none" stroke="#f2f2f2" stroke-width="1.3" stroke-linejoin="miter"/>
<path d="M1485 773 H1622.5 V618 H1485" fill="none" stroke="#8c8c8c" stroke-width="5.4" stroke-linejoin="miter"/>
<path d="M1485 773 H1622.5 V618 H1485" fill="none" stroke="#c8c8c8" stroke-width="3.4" stroke-linejoin="miter"/>
<path d="M1485 773 H1622.5 V618 H1485" fill="none" stroke="#f2f2f2" stroke-width="1.3" stroke-linejoin="miter"/>
<path d="M1485 696.5 H1685 L1707 717 V751" fill="none" stroke="#8c8c8c" stroke-width="5.4" stroke-linejoin="miter"/>
<path d="M1485 696.5 H1685 L1707 717 V751" fill="none" stroke="#c8c8c8" stroke-width="3.4" stroke-linejoin="miter"/>
<path d="M1485 696.5 H1685 L1707 717 V751" fill="none" stroke="#f2f2f2" stroke-width="1.3" stroke-linejoin="miter"/>
<path d="M1727 751 V717 L1748.4 696.5 H1769 L1791 674.4 V457 L1769.7 436.4 H1691.7 V380.5 H1715" fill="none" stroke="#8c8c8c" stroke-width="5.4" stroke-linejoin="miter"/>
<path d="M1727 751 V717 L1748.4 696.5 H1769 L1791 674.4 V457 L1769.7 436.4 H1691.7 V380.5 H1715" fill="none" stroke="#c8c8c8" stroke-width="3.4" stroke-linejoin="miter"/>
<path d="M1727 751 V717 L1748.4 696.5 H1769 L1791 674.4 V457 L1769.7 436.4 H1691.7 V380.5 H1715" fill="none" stroke="#f2f2f2" stroke-width="1.3" stroke-linejoin="miter"/>
<path d="M271.5 604 H299" fill="none" stroke="#e0e0e0" stroke-width="1.2"/>
<circle cx="156" cy="736.2" r="6.6" fill="#dedede" stroke="#9a9a9a" stroke-width="1"/>
<circle cx="305" cy="604" r="6.6" fill="#dedede" stroke="#9a9a9a" stroke-width="1"/>
<circle cx="305" cy="694" r="6.6" fill="#dedede" stroke="#9a9a9a" stroke-width="1"/>
<circle cx="305" cy="786.5" r="6.6" fill="#dedede" stroke="#9a9a9a" stroke-width="1"/>
<circle cx="1504.5" cy="773" r="6.6" fill="#dedede" stroke="#9a9a9a" stroke-width="1"/>
<circle cx="1622.5" cy="696.5" r="6.6" fill="#dedede" stroke="#9a9a9a" stroke-width="1"/>
<circle cx="1685" cy="696.5" r="6.6" fill="#dedede" stroke="#9a9a9a" stroke-width="1"/>
<circle cx="1748.4" cy="696.5" r="6.6" fill="#dedede" stroke="#9a9a9a" stroke-width="1"/>
<circle cx="1791" cy="634" r="6.6" fill="#dedede" stroke="#9a9a9a" stroke-width="1"/>
<path d="M189 685.7 L211 694 L189 702.3 Z M233 685.7 L211 694 L233 702.3 Z" fill="url(#vgrad)" stroke="#000" stroke-width="1.2" stroke-linejoin="round"/>
<text x="211" y="677" font-family='"Liberation Sans", sans-serif' font-size="16.5" font-weight="bold" fill="#fff" text-anchor="middle" dominant-baseline="central" textLength="31.12" lengthAdjust="spacingAndGlyphs" >V01</text>
<text x="213" y="718" font-family='"Liberation Sans", sans-serif' font-size="16.5" font-weight="bold" fill="#fff" text-anchor="middle" dominant-baseline="central" textLength="31.09" lengthAdjust="spacingAndGlyphs" >H.F.</text>
<path d="M189 778.2 L211 786.5 L189 794.8 Z M233 778.2 L211 786.5 L233 794.8 Z" fill="url(#vgrad)" stroke="#000" stroke-width="1.2" stroke-linejoin="round"/>
<text x="211" y="770.4" font-family='"Liberation Sans", sans-serif' font-size="16.5" font-weight="bold" fill="#fff" text-anchor="middle" dominant-baseline="central" textLength="31.12" lengthAdjust="spacingAndGlyphs" >V02</text>
<text x="213" y="809.3" font-family='"Liberation Sans", sans-serif' font-size="16.5" font-weight="bold" fill="#fff" text-anchor="middle" dominant-baseline="central" textLength="29.15" lengthAdjust="spacingAndGlyphs" >L.F.</text>
<path d="M351 596.0 L373 604.3 L351 612.5999999999999 Z M395 596.0 L373 604.3 L395 612.5999999999999 Z" fill="url(#vgrad)" stroke="#000" stroke-width="1.2" stroke-linejoin="round"/>
<text x="373" y="586.5" font-family='"Liberation Sans", sans-serif' font-size="16.5" font-weight="bold" fill="#fff" text-anchor="middle" dominant-baseline="central" textLength="31.12" lengthAdjust="spacingAndGlyphs" >V04</text>
<path d="M350.4 685.7 L372.4 694 L350.4 702.3 Z M394.4 685.7 L372.4 694 L394.4 702.3 Z" fill="url(#vgrad)" stroke="#000" stroke-width="1.2" stroke-linejoin="round"/>
<text x="372.4" y="677" font-family='"Liberation Sans", sans-serif' font-size="16.5" font-weight="bold" fill="#fff" text-anchor="middle" dominant-baseline="central" textLength="31.12" lengthAdjust="spacingAndGlyphs" >V03</text>
<path d="M350.4 778.2 L372.4 786.5 L350.4 794.8 Z M394.4 778.2 L372.4 786.5 L394.4 794.8 Z" fill="url(#vgrad)" stroke="#000" stroke-width="1.2" stroke-linejoin="round"/>
<text x="372.4" y="768.5" font-family='"Liberation Sans", sans-serif' font-size="16.5" font-weight="bold" fill="#fff" text-anchor="middle" dominant-baseline="central" textLength="31.12" lengthAdjust="spacingAndGlyphs" >V06</text>
<path d="M1538.2 609.7 L1560.2 618 L1538.2 626.3 Z M1582.2 609.7 L1560.2 618 L1582.2 626.3 Z" fill="url(#vgrad)" stroke="#000" stroke-width="1.2" stroke-linejoin="round"/>
<text x="1560.2" y="600.5" font-family='"Liberation Sans", sans-serif' font-size="16.5" font-weight="bold" fill="#fff" text-anchor="middle" dominant-baseline="central" textLength="31.12" lengthAdjust="spacingAndGlyphs" >V05</text>
<path d="M1536.5 687.7 L1558.5 696 L1536.5 704.3 Z M1580.5 687.7 L1558.5 696 L1580.5 704.3 Z" fill="url(#vgrad)" stroke="#000" stroke-width="1.2" stroke-linejoin="round"/>
<text x="1558.5" y="678" font-family='"Liberation Sans", sans-serif' font-size="16.5" font-weight="bold" fill="#fff" text-anchor="middle" dominant-baseline="central" textLength="31.12" lengthAdjust="spacingAndGlyphs" >V08</text>
<path d="M1538 764.7 L1560 773 L1538 781.3 Z M1582 764.7 L1560 773 L1582 781.3 Z" fill="url(#vgrad)" stroke="#000" stroke-width="1.2" stroke-linejoin="round"/>
<text x="1560" y="753" font-family='"Liberation Sans", sans-serif' font-size="16.5" font-weight="bold" fill="#fff" text-anchor="middle" dominant-baseline="central" textLength="31.12" lengthAdjust="spacingAndGlyphs" >V07</text>
<path d="M1782.7 513 L1791 535 L1799.3 513 Z M1782.7 557 L1791 535 L1799.3 557 Z" fill="url(#vgradh)" stroke="#000" stroke-width="1.2" stroke-linejoin="round"/>
<text x="1801" y="535.5" font-family='"Liberation Sans", sans-serif' font-size="16" font-weight="bold" fill="#fff" text-anchor="start" dominant-baseline="central" textLength="30.18" lengthAdjust="spacingAndGlyphs" >V09</text>
<ellipse cx="269.5" cy="780" rx="15.5" ry="5" fill="#fff" stroke="#222" stroke-width="0.8"/>
<ellipse cx="269.5" cy="793.7" rx="15.5" ry="5" fill="#fff" stroke="#222" stroke-width="0.8"/>
<polygon points="116.5,723.2 138,736.2 116.5,750" fill="#fff" stroke="#222" stroke-width="1"/>
<text x="104.8" y="726" font-family='"Liberation Sans", sans-serif' font-size="16" font-weight="bold" fill="#fff" text-anchor="end" dominant-baseline="central" textLength="36.75" lengthAdjust="spacingAndGlyphs" >Inert</text>
<text x="104.8" y="745" font-family='"Liberation Sans", sans-serif' font-size="16" font-weight="bold" fill="#fff" text-anchor="end" dominant-baseline="central" textLength="32.06" lengthAdjust="spacingAndGlyphs" >Gas</text>
<text x="219" y="574.6" font-family='"Liberation Sans", sans-serif' font-size="16" font-weight="bold" fill="#fff" text-anchor="middle" dominant-baseline="central" textLength="26.39" lengthAdjust="spacingAndGlyphs" >bar</text>
<rect x="205.2" y="588.9" width="66.30" height="29.10" fill="#3e5fdc" />
<path d="M205.7 618 V589.4 H271.5" fill="none" stroke="#f0f0f0" stroke-width="1.3"/>
<path d="M205.2 617.3 H270.8 V588.9" fill="none" stroke="#9a9a9a" stroke-width="1.6"/>
<text x="238.3" y="604" font-family='"Liberation Sans", sans-serif' font-size="16" font-weight="bold" fill="#fff" text-anchor="middle" dominant-baseline="central" textLength="38.66" lengthAdjust="spacingAndGlyphs" >-0.00</text>
<rect x="421.75" y="590.15" width="26.50" height="25.70" fill="#7a7a7a" stroke="#f4f4f4" stroke-width="1.5" />
<text x="435.0" y="603.5" font-family='"Liberation Sans", sans-serif' font-size="16" font-weight="bold" fill="#fff" text-anchor="middle" dominant-baseline="central" textLength="22" lengthAdjust="spacingAndGlyphs" >G1</text>
<rect x="421.75" y="681.15" width="26.50" height="25.70" fill="#7a7a7a" stroke="#f4f4f4" stroke-width="1.5" />
<text x="435.0" y="694.5" font-family='"Liberation Sans", sans-serif' font-size="16" font-weight="bold" fill="#fff" text-anchor="middle" dominant-baseline="central" textLength="22.5" lengthAdjust="spacingAndGlyphs" >G2</text>
<rect x="1458.05" y="604.35" width="25.90" height="25.20" fill="#7a7a7a" stroke="#f4f4f4" stroke-width="1.5" />
<text x="1471.0" y="617.45" font-family='"Liberation Sans", sans-serif' font-size="16" font-weight="bold" fill="#fff" text-anchor="middle" dominant-baseline="central" textLength="26" lengthAdjust="spacingAndGlyphs" >W2</text>
<rect x="1457.75" y="681.45" width="26.50" height="25.20" fill="#7a7a7a" stroke="#f4f4f4" stroke-width="1.5" />
<text x="1471.0" y="694.55" font-family='"Liberation Sans", sans-serif' font-size="16" font-weight="bold" fill="#fff" text-anchor="middle" dominant-baseline="central" textLength="25" lengthAdjust="spacingAndGlyphs" >W1</text>
<rect x="1457.75" y="760.75" width="26.50" height="24.50" fill="#7a7a7a" stroke="#f4f4f4" stroke-width="1.5" />
<text x="1471.0" y="773.5" font-family='"Liberation Sans", sans-serif' font-size="16" font-weight="bold" fill="#fff" text-anchor="middle" dominant-baseline="central" textLength="11.5" lengthAdjust="spacingAndGlyphs" >R</text>
<text x="211.9" y="968.75" font-family='"Liberation Sans", sans-serif' font-size="16" font-weight="bold" fill="#fff" text-anchor="end" dominant-baseline="central" textLength="122.52" lengthAdjust="spacingAndGlyphs" >Synth Elapsed:</text>
<text x="229.7" y="968.75" font-family='"Liberation Sans", sans-serif' font-size="16" font-weight="bold" fill="#fff" text-anchor="start" dominant-baseline="central" textLength="62" lengthAdjust="spacingAndGlyphs" >0:42:10</text>
<text x="211.9" y="1000" font-family='"Liberation Sans", sans-serif' font-size="16" font-weight="bold" fill="#fff" text-anchor="end" dominant-baseline="central" textLength="136.63" lengthAdjust="spacingAndGlyphs" >Next Step Cond.:</text>
<text x="229.7" y="1000" font-family='"Liberation Sans", sans-serif' font-size="16" font-weight="bold" fill="#fff" text-anchor="start" dominant-baseline="central" textLength="9.43" lengthAdjust="spacingAndGlyphs" >0</text>
<rect x="15" y="1018.75" width="308.40" height="35.00" fill="#fff" />
<path d="M15 1053.75 V1018.75 H323.4" fill="none" stroke="#8c8c8c" stroke-width="1.3"/>
<path d="M15 1052.75 H322.4 V1018.75" fill="none" stroke="#9a9a9a" stroke-width="2"/>
<text x="169.2" y="1037.25" font-family='"Liberation Sans", sans-serif' font-size="16" font-weight="normal" fill="#000" text-anchor="middle" dominant-baseline="central" textLength="204.66" lengthAdjust="spacingAndGlyphs" >Time Based or Wait for User</text>
<path d="M339.7 950 V1062" fill="none" stroke="#d8d8d8" stroke-width="1.2"/>
<path d="M577.5 950 V1062" fill="none" stroke="#d8d8d8" stroke-width="1.2"/>
<text x="449" y="978" font-family='"Liberation Sans", sans-serif' font-size="16" font-weight="bold" fill="#fff" text-anchor="end" dominant-baseline="central" textLength="80.12" lengthAdjust="spacingAndGlyphs" >Elaspsed:</text>
<rect x="461" y="957.2" width="97.40" height="41.20" fill="#fff" />
<path d="M461 998.4 V957.2 H558.4" fill="none" stroke="#8c8c8c" stroke-width="1.3"/>
<path d="M461 997.4 H557.4 V957.2" fill="none" stroke="#9a9a9a" stroke-width="2"/>
<text x="509.7" y="978.8" font-family='"Liberation Sans", sans-serif' font-size="16" font-weight="bold" fill="#000" text-anchor="middle" dominant-baseline="central" textLength="23.58" lengthAdjust="spacingAndGlyphs" >0 s</text>
<text x="449" y="1034" font-family='"Liberation Sans", sans-serif' font-size="16" font-weight="bold" fill="#fff" text-anchor="end" dominant-baseline="central" textLength="44.9" lengthAdjust="spacingAndGlyphs" >Total:</text>
<rect x="461" y="1013" width="97.40" height="40.75" fill="#fff" />
<path d="M461 1053.75 V1013 H558.4" fill="none" stroke="#8c8c8c" stroke-width="1.3"/>
<path d="M461 1052.75 H557.4 V1013" fill="none" stroke="#9a9a9a" stroke-width="2"/>
<text x="509.7" y="1034.375" font-family='"Liberation Sans", sans-serif' font-size="16" font-weight="bold" fill="#000" text-anchor="middle" dominant-baseline="central" textLength="23.58" lengthAdjust="spacingAndGlyphs" >0 s</text>
<rect x="701.25" y="951.25" width="823.35" height="105.35" fill="#fff" stroke="#000" stroke-width="1" />
<rect x="701.75" y="986.9" width="822.35" height="34.35" fill="#80ff80" stroke="#000" stroke-width="1" />
<path d="M759.4 951.25 V1056.6" fill="none" stroke="#000" stroke-width="1"/>
<text x="695" y="970" font-family='"Liberation Sans", sans-serif' font-size="16" font-weight="bold" fill="#fff" text-anchor="end" dominant-baseline="central" textLength="77.29" lengthAdjust="spacingAndGlyphs" >Previous:</text>
<text x="695" y="1004.4" font-family='"Liberation Sans", sans-serif' font-size="16" font-weight="bold" fill="#fff" text-anchor="end" dominant-baseline="central" textLength="66.9" lengthAdjust="spacingAndGlyphs" >Current:</text>
<text x="695" y="1039.4" font-family='"Liberation Sans", sans-serif' font-size="16" font-weight="bold" fill="#fff" text-anchor="end" dominant-baseline="central" textLength="42.41" lengthAdjust="spacingAndGlyphs" >Next:</text>
<text x="730" y="970" font-family='"Liberation Sans", sans-serif' font-size="16" font-weight="normal" fill="#000" text-anchor="middle" dominant-baseline="central" textLength="9.08" lengthAdjust="spacingAndGlyphs" >0</text>
<text x="730" y="1004.4" font-family='"Liberation Sans", sans-serif' font-size="16" font-weight="normal" fill="#000" text-anchor="middle" dominant-baseline="central" textLength="9.08" lengthAdjust="spacingAndGlyphs" >0</text>
<text x="730" y="1039.4" font-family='"Liberation Sans", sans-serif' font-size="16" font-weight="normal" fill="#000" text-anchor="middle" dominant-baseline="central" textLength="9.08" lengthAdjust="spacingAndGlyphs" >0</text>
<text x="763.75" y="1004.4" font-family='"Liberation Sans", sans-serif' font-size="16" font-weight="bold" fill="#000" text-anchor="start" dominant-baseline="central" textLength="317.32" lengthAdjust="spacingAndGlyphs" >Please press START to begin synthesis</text>
<rect x="1724" y="950.6" width="166.7" height="49.8" rx="7" fill="#000"/>
<rect x="1727" y="953.6" width="160.7" height="43.8" rx="4.5" fill="url(#btng)" stroke="#f0f0f0" stroke-width="0.9"/>
<text x="1807" y="976.0" font-family='"Liberation Sans", sans-serif' font-size="20" font-weight="bold" fill="#fff" text-anchor="middle" dominant-baseline="central" textLength="65.5" lengthAdjust="spacingAndGlyphs" >START</text>
<rect x="1724" y="1006.7" width="166.7" height="49.2" rx="7" fill="#000"/>
<rect x="1727" y="1009.7" width="160.7" height="43.2" rx="4.5" fill="url(#btng)" stroke="#f0f0f0" stroke-width="0.9"/>
<text x="1807" y="1031.8000000000002" font-family='"Liberation Sans", sans-serif' font-size="20" font-weight="bold" fill="#fff" text-anchor="middle" dominant-baseline="central" textLength="69.6" lengthAdjust="spacingAndGlyphs" >ABORT</text>
</svg></body></html>
